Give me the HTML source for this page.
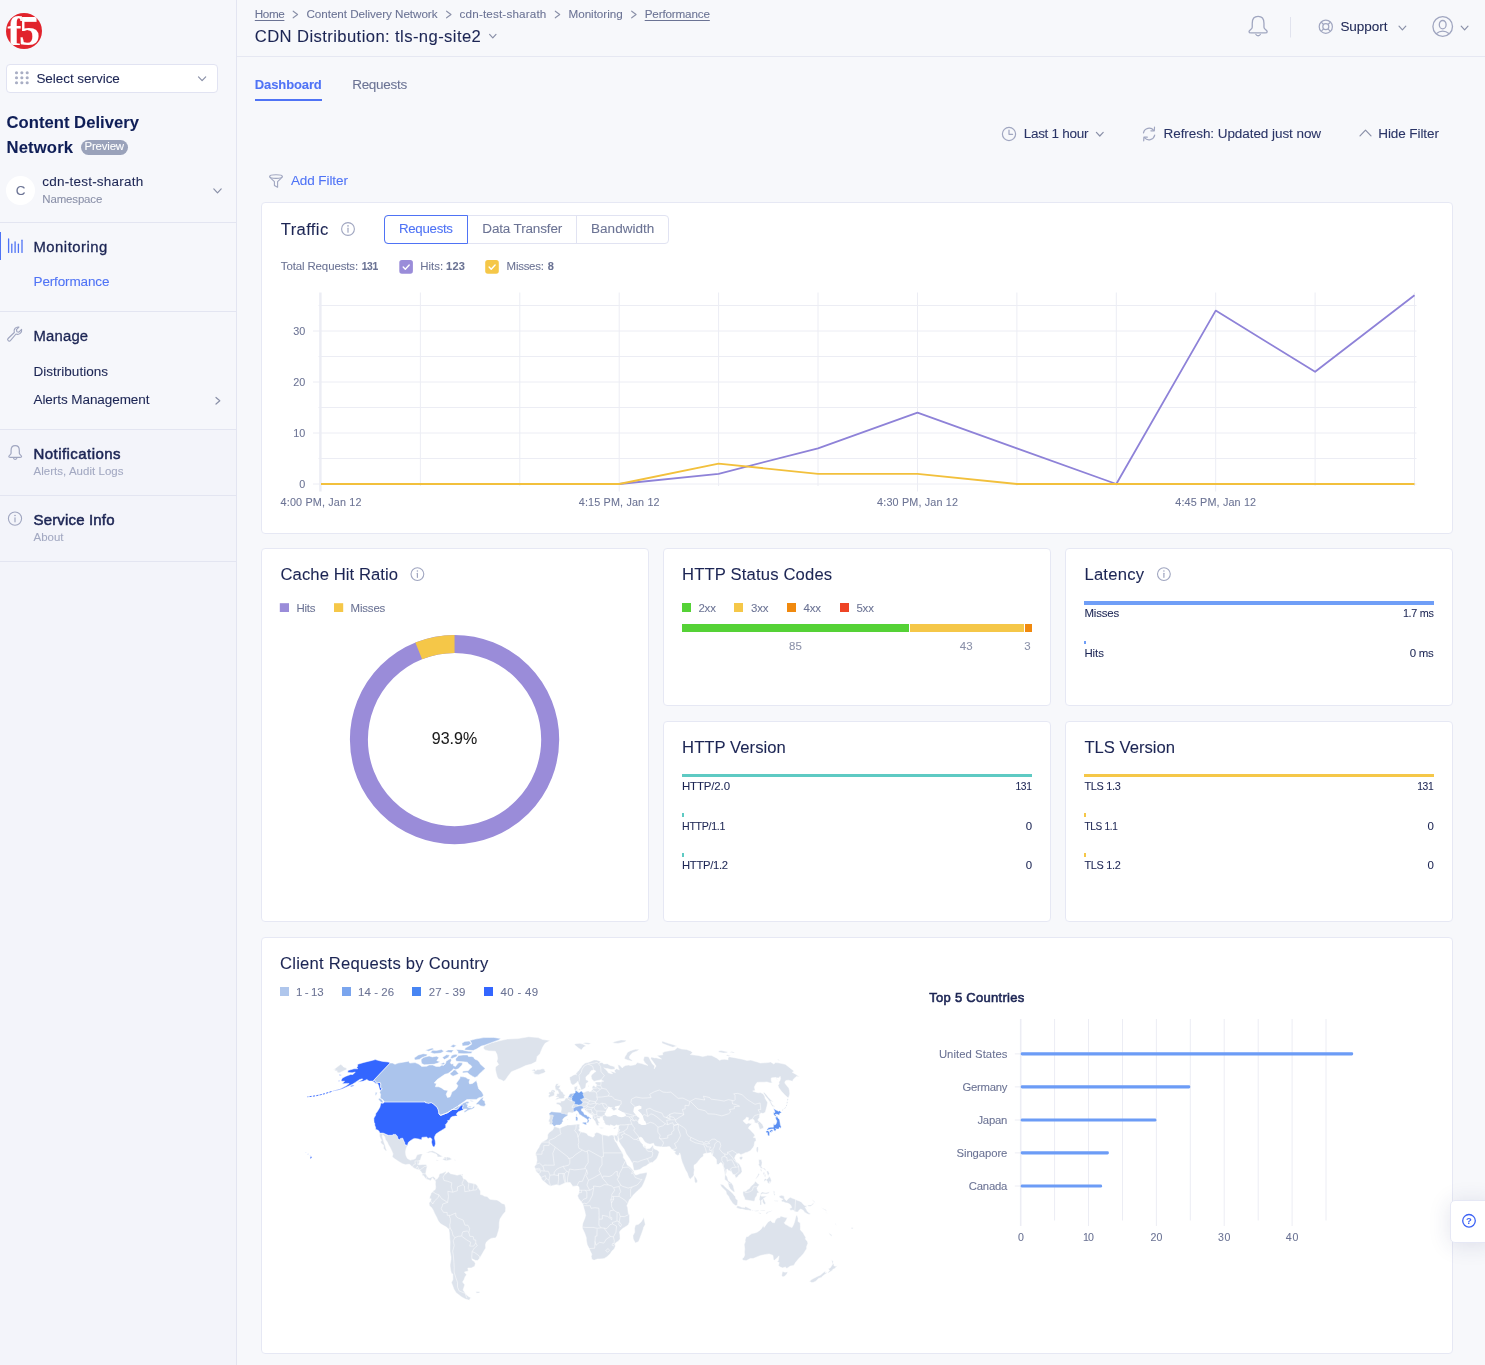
<!DOCTYPE html>
<html lang="en"><head><meta charset="utf-8"><title>CDN Distribution: tls-ng-site2 - Performance</title>
<style>
html,body{margin:0;padding:0}
body{width:1485px;height:1365px;position:relative;overflow:hidden;background:#f7f8fb;font-family:'Liberation Sans', sans-serif;}
#app{position:absolute;left:0;top:0;width:1485px;height:1365px;will-change:transform}
.a{position:absolute;display:block}
svg.a{overflow:visible}
svg text{font-family:'Liberation Sans', sans-serif}
.t{position:absolute;white-space:pre;line-height:1;-webkit-text-stroke:0.08px currentColor;}
</style></head>
<body>
<div id="app">
<aside>
<div class="a" style="left:0px;top:0px;width:236px;height:1365px;background:#f6f7fb;border-right:1px solid #e3e5f1;"></div>
<div class="a" style="left:0px;top:429px;width:236px;height:936px;background:#f3f4fa;"></div>
<div class="a" style="left:0px;top:221.5px;width:236px;height:1px;background:#e3e5f1;"></div>
<div class="a" style="left:0px;top:311px;width:236px;height:1px;background:#e3e5f1;"></div>
<div class="a" style="left:0px;top:429px;width:236px;height:1px;background:#e3e5f1;"></div>
<div class="a" style="left:0px;top:495px;width:236px;height:1px;background:#e3e5f1;"></div>
<div class="a" style="left:0px;top:561px;width:236px;height:1px;background:#e3e5f1;"></div>
<div class="a" style="left:6px;top:13px;width:36px;height:36px;background:#e1232c;border-radius:50%;overflow:hidden"><span class="t" style="left:1.5px;top:-3.5px;font-family:'Liberation Serif',serif;font-weight:700;font-size:42px;letter-spacing:-2.5px;color:#fff;line-height:1">f5</span></div>
<div class="a" style="left:6px;top:64px;width:212px;height:29px;background:#fff;border:1px solid #e1e3f2;border-radius:4px;box-sizing:border-box;"></div>
<svg class="a" style="left:10px;top:66px" width="200" height="26" viewBox="10 66 200 26" ><circle cx="16.5" cy="72.7" r="1.55" fill="#a9aec4"/><circle cx="16.5" cy="77.75" r="1.55" fill="#a9aec4"/><circle cx="16.5" cy="82.8" r="1.55" fill="#a9aec4"/><circle cx="21.85" cy="72.7" r="1.55" fill="#a9aec4"/><circle cx="21.85" cy="77.75" r="1.55" fill="#a9aec4"/><circle cx="21.85" cy="82.8" r="1.55" fill="#a9aec4"/><circle cx="27.2" cy="72.7" r="1.55" fill="#a9aec4"/><circle cx="27.2" cy="77.75" r="1.55" fill="#a9aec4"/><circle cx="27.2" cy="82.8" r="1.55" fill="#a9aec4"/><polyline points="198.5,76.9 202.1,80.6 205.7,76.9" fill="none" stroke="#8a90a8" stroke-width="1.2" stroke-linecap="round" stroke-linejoin="round"/></svg>
<div class="a" style="left:80.8px;top:139.8px;width:47.2px;height:15px;background:#9aa2ba;border-radius:7.5px;"></div>
<div class="a" style="left:6px;top:176px;width:29px;height:29px;background:#fff;border-radius:50%;"></div>
<div class="a" style="left:0px;top:232px;width:1px;height:28px;background:#4f73f5;"></div>
<svg class="a" style="left:0px;top:180px" width="236" height="360" viewBox="0 180 236 360" ><polyline points="213.8,188.9 217.5,192.8 221.2,188.9" fill="none" stroke="#8a90a8" stroke-width="1.2" stroke-linecap="round" stroke-linejoin="round"/><line x1="8.6" y1="239" x2="8.6" y2="252.4" stroke="#4f73f5" stroke-width="1.3" stroke-linecap="round"/><line x1="11.8" y1="244.2" x2="11.8" y2="252.4" stroke="#4f73f5" stroke-width="1.3" stroke-linecap="round"/><line x1="15.1" y1="241.8" x2="15.1" y2="252.4" stroke="#4f73f5" stroke-width="1.3" stroke-linecap="round"/><line x1="18.4" y1="244.2" x2="18.4" y2="252.4" stroke="#4f73f5" stroke-width="1.3" stroke-linecap="round"/><line x1="22.0" y1="240.2" x2="22.0" y2="252.4" stroke="#4f73f5" stroke-width="1.3" stroke-linecap="round"/><path d="M21.6 329.4 a4.1 4.1 0 0 1 -5.6 4.6 l-5.6 6.6 a1.55 1.55 0 0 1 -2.3 -2.1 l6.2 -6 a4.1 4.1 0 0 1 4.6 -5.4 l-2.5 2.6 0.5 2 2 0.5 z" fill="none" stroke="#a0a6c0" stroke-width="1.15" stroke-linejoin="round"/><polyline points="216,397.5 219.8,400.75 216,404" fill="none" stroke="#8a90a8" stroke-width="1.2" stroke-linecap="round" stroke-linejoin="round"/><path d="M15.20,445.71 C12.36,445.71 11.08,447.99 11.08,450.47 L11.08,453.31 C11.08,454.73 8.81,455.44 8.81,456.50 C8.81,457.22 9.52,457.36 10.23,457.36 L20.17,457.36 C20.88,457.36 21.59,457.22 21.59,456.50 C21.59,455.44 19.32,454.73 19.32,453.31 L19.32,450.47 C19.32,447.99 18.04,445.71 15.20,445.71 Z" fill="none" stroke="#a0a6c0" stroke-width="1.2" stroke-linejoin="round"/><path d="M13.64,458.35 C14.13,459.63 16.27,459.63 16.76,458.35" fill="none" stroke="#a0a6c0" stroke-width="1.2" stroke-linecap="round"/><circle cx="15" cy="518.6" r="6.6" fill="none" stroke="#a0a6c0" stroke-width="1.1"/><line x1="15" y1="517.8000000000001" x2="15" y2="521.8000000000001" stroke="#a0a6c0" stroke-width="1.2" stroke-linecap="round"/><circle cx="15" cy="515.5" r="0.8" fill="#a0a6c0"/></svg>
<span class="t" style="left:36.40px;top:72.00px;font-size:13.52px;color:#1c2554;letter-spacing:-0.049px;">Select service</span>
<span class="t" style="left:6.50px;top:115.00px;font-size:16.64px;color:#0f1e57;font-weight:700;letter-spacing:0.026px;">Content Delivery</span>
<span class="t" style="left:6.50px;top:140.00px;font-size:16.64px;color:#0f1e57;font-weight:700;letter-spacing:0.151px;">Network</span>
<span class="t" style="left:84.50px;top:141.00px;font-size:11.44px;color:#ffffff;letter-spacing:-0.181px;">Preview</span>
<span class="t" style="left:15.70px;top:184.00px;font-size:13.52px;color:#6b7394;">C</span>
<span class="t" style="left:42.30px;top:175.00px;font-size:13.52px;color:#1c2554;letter-spacing:0.222px;">cdn-test-sharath</span>
<span class="t" style="left:42.30px;top:194.00px;font-size:11.44px;color:#8a90a8;letter-spacing:-0.129px;">Namespace</span>
<span class="t" style="left:33.50px;top:240.00px;font-size:14.85px;color:#1c2554;letter-spacing:0.488px;-webkit-text-stroke:0.3px #1c2554;">Monitoring</span>
<span class="t" style="left:33.50px;top:275.00px;font-size:13.52px;color:#4f73f5;letter-spacing:-0.138px;">Performance</span>
<span class="t" style="left:33.50px;top:329.00px;font-size:14.85px;color:#1c2554;letter-spacing:0.189px;-webkit-text-stroke:0.3px #1c2554;">Manage</span>
<span class="t" style="left:33.50px;top:365.00px;font-size:13.52px;color:#1c2554;letter-spacing:0.010px;">Distributions</span>
<span class="t" style="left:33.50px;top:393.00px;font-size:13.52px;color:#1c2554;letter-spacing:-0.075px;">Alerts Management</span>
<span class="t" style="left:33.50px;top:446.00px;font-size:15.0px;color:#1c2554;letter-spacing:0.441px;-webkit-text-stroke:0.52px #1c2554;">Notifications</span>
<span class="t" style="left:33.50px;top:466.00px;font-size:11.44px;color:#a3a9c2;letter-spacing:0.058px;">Alerts, Audit Logs</span>
<span class="t" style="left:33.50px;top:512.00px;font-size:15.0px;color:#1c2554;letter-spacing:0.162px;-webkit-text-stroke:0.52px #1c2554;">Service Info</span>
<span class="t" style="left:33.50px;top:532.00px;font-size:11.44px;color:#a3a9c2;letter-spacing:0.027px;">About</span>
</aside>
<header>
<div class="a" style="left:237px;top:56px;width:1248px;height:1px;background:#e6e8f2;"></div>
<svg class="a" style="left:237px;top:0px" width="1248" height="56" viewBox="237 0 1248 56" ><polyline points="293.2,11.2 297.6,14.5 293.2,17.8" fill="none" stroke="#8a90a8" stroke-width="1.1" stroke-linecap="round" stroke-linejoin="round"/><polyline points="446.6,11.2 451,14.5 446.6,17.8" fill="none" stroke="#8a90a8" stroke-width="1.1" stroke-linecap="round" stroke-linejoin="round"/><polyline points="555.3,11.2 559.7,14.5 555.3,17.8" fill="none" stroke="#8a90a8" stroke-width="1.1" stroke-linecap="round" stroke-linejoin="round"/><polyline points="631.7,11.2 636.1,14.5 631.7,17.8" fill="none" stroke="#8a90a8" stroke-width="1.1" stroke-linecap="round" stroke-linejoin="round"/><polyline points="489.6,34.4 492.8,37.8 496,34.4" fill="none" stroke="#8a90a8" stroke-width="1.2" stroke-linecap="round" stroke-linejoin="round"/><path d="M1258.10,16.40 C1254.06,16.40 1252.24,19.63 1252.24,23.17 L1252.24,27.21 C1252.24,29.23 1249.01,30.24 1249.01,31.75 C1249.01,32.77 1250.02,32.97 1251.03,32.97 L1265.17,32.97 C1266.18,32.97 1267.19,32.77 1267.19,31.75 C1267.19,30.24 1263.96,29.23 1263.96,27.21 L1263.96,23.17 C1263.96,19.63 1262.14,16.40 1258.10,16.40 Z" fill="none" stroke="#a0a6c0" stroke-width="1.3" stroke-linejoin="round"/><path d="M1255.88,34.38 C1256.58,36.20 1259.62,36.20 1260.32,34.38" fill="none" stroke="#a0a6c0" stroke-width="1.3" stroke-linecap="round"/><line x1="1290.5" y1="17" x2="1290.5" y2="37.5" stroke="#e1e3ee" stroke-width="1"/><circle cx="1325.8" cy="26.7" r="6.6" fill="none" stroke="#a0a6c0" stroke-width="1.2"/><circle cx="1325.8" cy="26.7" r="3" fill="none" stroke="#a0a6c0" stroke-width="1.2"/><line x1="1328.0" y1="28.9" x2="1330.3999999999999" y2="31.299999999999997" stroke="#a0a6c0" stroke-width="1.2"/><line x1="1328.0" y1="24.5" x2="1330.3999999999999" y2="22.1" stroke="#a0a6c0" stroke-width="1.2"/><line x1="1323.6" y1="28.9" x2="1321.2" y2="31.299999999999997" stroke="#a0a6c0" stroke-width="1.2"/><line x1="1323.6" y1="24.5" x2="1321.2" y2="22.1" stroke="#a0a6c0" stroke-width="1.2"/><polyline points="1399,26.2 1402.4,29.8 1405.8,26.2" fill="none" stroke="#8a90a8" stroke-width="1.2" stroke-linecap="round" stroke-linejoin="round"/><circle cx="1442.7" cy="26.5" r="9.8" fill="none" stroke="#a0a6c0" stroke-width="1.3"/><ellipse cx="1442.7" cy="24.7" rx="3.4" ry="4.2" fill="none" stroke="#a0a6c0" stroke-width="1.3"/><path d="M1436.1000000000001 33.7 Q1442.7 28.7 1449.3 33.7" fill="none" stroke="#a0a6c0" stroke-width="1.3"/><polyline points="1461.2,26.2 1464.6,29.8 1468,26.2" fill="none" stroke="#8a90a8" stroke-width="1.2" stroke-linecap="round" stroke-linejoin="round"/></svg>
<span class="t" style="left:254.80px;top:8.00px;font-size:11.7px;color:#6b7394;letter-spacing:-0.396px;text-decoration:underline;text-underline-offset:1.5px;">Home</span>
<span class="t" style="left:306.50px;top:8.00px;font-size:11.7px;color:#6b7394;letter-spacing:-0.066px;">Content Delivery Network</span>
<span class="t" style="left:459.60px;top:8.00px;font-size:11.7px;color:#6b7394;letter-spacing:0.150px;">cdn-test-sharath</span>
<span class="t" style="left:568.50px;top:8.00px;font-size:11.7px;color:#6b7394;letter-spacing:-0.042px;">Monitoring</span>
<span class="t" style="left:644.70px;top:8.00px;font-size:11.7px;color:#6b7394;letter-spacing:-0.162px;text-decoration:underline;text-underline-offset:1.5px;">Performance</span>
<span class="t" style="left:254.80px;top:29.00px;font-size:16.64px;color:#1c2554;letter-spacing:0.402px;">CDN Distribution: tls-ng-site2</span>
<span class="t" style="left:1340.40px;top:20.00px;font-size:13.52px;color:#1c2554;letter-spacing:-0.057px;">Support</span>
</header>
<main>
<nav>
<div class="a" style="left:255px;top:98.6px;width:67px;height:2px;background:#4f73f5;"></div>
<svg class="a" style="left:255px;top:120px" width="1230" height="72" viewBox="255 120 1230 72" ><circle cx="1009" cy="134" r="6.6" fill="none" stroke="#a0a6c0" stroke-width="1.2"/><polyline points="1009,130 1009,134.3 1012.6,134.3" fill="none" stroke="#a0a6c0" stroke-width="1.2" stroke-linecap="round" stroke-linejoin="round"/><polyline points="1096.4,132.4 1099.8000000000002,136 1103.2,132.4" fill="none" stroke="#8a90a8" stroke-width="1.2" stroke-linecap="round" stroke-linejoin="round"/><path d="M1143.5 132.8 A5.8 5.8 0 0 1 1153.6999999999998 130.4" fill="none" stroke="#a0a6c0" stroke-width="1.2" stroke-linecap="round"/><polyline points="1154.5,127.2 1154.3,130.8 1150.8999999999999,130.8" fill="none" stroke="#a0a6c0" stroke-width="1.2" stroke-linecap="round" stroke-linejoin="round"/><path d="M1154.6999999999998 135.2 A5.8 5.8 0 0 1 1144.5 137.6" fill="none" stroke="#a0a6c0" stroke-width="1.2" stroke-linecap="round"/><polyline points="1143.6999999999998,140.8 1143.8999999999999,137.2 1147.3,137.2" fill="none" stroke="#a0a6c0" stroke-width="1.2" stroke-linecap="round" stroke-linejoin="round"/><polyline points="1360,135.8 1365.5,130.2 1371,135.8" fill="none" stroke="#8a90a8" stroke-width="1.2" stroke-linecap="round" stroke-linejoin="round"/><path d="M269.6 176.6 C269.6 174.2 282.4 174.2 282.4 176.6 C282.4 177.6 280.5 178.6 277.6 181.6 L277.6 187.2 L274.4 185.4 L274.4 181.6 C271.5 178.6 269.6 177.6 269.6 176.6 Z" fill="none" stroke="#a0a6c0" stroke-width="1.1" stroke-linejoin="round"/><path d="M269.6 176.6 C269.6 179 282.4 179 282.4 176.6" fill="none" stroke="#a0a6c0" stroke-width="1.1"/></svg>
<span class="t" style="left:254.80px;top:78.00px;font-size:13.0px;color:#4f73f5;font-weight:700;letter-spacing:-0.113px;">Dashboard</span>
<span class="t" style="left:352.20px;top:78.00px;font-size:13.52px;color:#6b7394;letter-spacing:-0.301px;">Requests</span>
<span class="t" style="left:1023.70px;top:127.00px;font-size:13.52px;color:#2a3466;letter-spacing:-0.292px;">Last 1 hour</span>
<span class="t" style="left:1163.50px;top:127.00px;font-size:13.52px;color:#2a3466;letter-spacing:-0.070px;">Refresh: Updated just now</span>
<span class="t" style="left:1378.30px;top:127.00px;font-size:13.52px;color:#2a3466;letter-spacing:-0.099px;">Hide Filter</span>
<span class="t" style="left:290.90px;top:174.00px;font-size:13.52px;color:#4f73f5;letter-spacing:-0.094px;">Add Filter</span>
</nav>
<section>
<div class="a" style="left:261px;top:202px;width:1192px;height:332px;background:#fff;border:1px solid #e6e8f4;border-radius:4px;box-sizing:border-box;"></div>
<div class="a" style="left:384px;top:215px;width:285px;height:29px;border:1px solid #e1e3f2;border-radius:4px;box-sizing:border-box;background:#fff;"></div>
<div class="a" style="left:576px;top:215px;width:1px;height:29px;background:#e1e3f2;"></div>
<div class="a" style="left:384px;top:215px;width:84px;height:29px;border:1px solid #4f73f5;border-radius:4px 0 0 4px;box-sizing:border-box;"></div>
<svg class="a" style="left:262px;top:203px" width="1190" height="330" viewBox="262 203 1190 330" ><circle cx="348" cy="229" r="6.4" fill="none" stroke="#a0a6c0" stroke-width="1.1"/><line x1="348" y1="228.2" x2="348" y2="232.2" stroke="#a0a6c0" stroke-width="1.2" stroke-linecap="round"/><circle cx="348" cy="225.9" r="0.8" fill="#a0a6c0"/><rect x="399.3" y="260.1" width="13.6" height="13.6" rx="2.6" fill="#9a8cd9"/><polyline points="403.2,267.1 405.3,269.20000000000005 409.2,265.1" fill="none" stroke="#fff" stroke-width="1.4" stroke-linecap="round" stroke-linejoin="round"/><rect x="485.2" y="260.1" width="13.6" height="13.6" rx="2.6" fill="#f5c748"/><polyline points="489.09999999999997,267.1 491.2,269.20000000000005 495.09999999999997,265.1" fill="none" stroke="#fff" stroke-width="1.4" stroke-linecap="round" stroke-linejoin="round"/><line x1="313" y1="484.0" x2="1416.5" y2="484.0" stroke="#ecedf4" stroke-width="1"/><line x1="318.5" y1="458.5" x2="1416.5" y2="458.5" stroke="#ecedf4" stroke-width="1"/><line x1="313" y1="433.0" x2="1416.5" y2="433.0" stroke="#ecedf4" stroke-width="1"/><line x1="318.5" y1="407.5" x2="1416.5" y2="407.5" stroke="#ecedf4" stroke-width="1"/><line x1="313" y1="382.0" x2="1416.5" y2="382.0" stroke="#ecedf4" stroke-width="1"/><line x1="318.5" y1="356.5" x2="1416.5" y2="356.5" stroke="#ecedf4" stroke-width="1"/><line x1="313" y1="331.0" x2="1416.5" y2="331.0" stroke="#ecedf4" stroke-width="1"/><line x1="318.5" y1="305.5" x2="1416.5" y2="305.5" stroke="#ecedf4" stroke-width="1"/><line x1="320.4" y1="292.5" x2="320.4" y2="491.5" stroke="#ecedf4" stroke-width="2.4"/><line x1="420.4" y1="292.5" x2="420.4" y2="486" stroke="#ecedf4" stroke-width="1"/><line x1="519.8" y1="292.5" x2="519.8" y2="486" stroke="#ecedf4" stroke-width="1"/><line x1="619.2" y1="292.5" x2="619.2" y2="491.5" stroke="#ecedf4" stroke-width="1"/><line x1="718.6" y1="292.5" x2="718.6" y2="486" stroke="#ecedf4" stroke-width="1"/><line x1="818.0" y1="292.5" x2="818.0" y2="486" stroke="#ecedf4" stroke-width="1"/><line x1="917.5" y1="292.5" x2="917.5" y2="491.5" stroke="#ecedf4" stroke-width="1"/><line x1="1016.9" y1="292.5" x2="1016.9" y2="486" stroke="#ecedf4" stroke-width="1"/><line x1="1116.3" y1="292.5" x2="1116.3" y2="486" stroke="#ecedf4" stroke-width="1"/><line x1="1215.7" y1="292.5" x2="1215.7" y2="491.5" stroke="#ecedf4" stroke-width="1"/><line x1="1315.1" y1="292.5" x2="1315.1" y2="486" stroke="#ecedf4" stroke-width="1"/><line x1="1414.5" y1="292.5" x2="1414.5" y2="486" stroke="#ecedf4" stroke-width="1"/><polyline points="321.0,484.0 420.4,484.0 519.8,484.0 619.2,484.0 718.6,473.8 818.0,448.3 917.5,412.6 1016.9,448.3 1116.3,484.0 1215.7,310.6 1315.1,371.8 1414.5,295.3" fill="none" stroke="#8e82d8" stroke-width="1.8" stroke-linejoin="round"/><polyline points="321.0,484.0 420.4,484.0 519.8,484.0 619.2,484.0 718.6,463.6 818.0,473.8 917.5,473.8 1016.9,484.0 1116.3,484.0 1215.7,484.0 1315.1,484.0 1414.5,484.0" fill="none" stroke="#f2c03c" stroke-width="1.8" stroke-linejoin="round"/><text x="305.3" y="487.6" text-anchor="end" style="font-size:10.8px;fill:#6b7394;stroke:#6b7394;stroke-width:0.08px">0</text><text x="305.3" y="436.6" text-anchor="end" style="font-size:10.8px;fill:#6b7394;stroke:#6b7394;stroke-width:0.08px">10</text><text x="305.3" y="385.6" text-anchor="end" style="font-size:10.8px;fill:#6b7394;stroke:#6b7394;stroke-width:0.08px">20</text><text x="305.3" y="334.6" text-anchor="end" style="font-size:10.8px;fill:#6b7394;stroke:#6b7394;stroke-width:0.08px">30</text><text x="280.6" y="505.9" textLength="80.8" lengthAdjust="spacing" style="font-size:10.8px;fill:#6b7394;stroke:#6b7394;stroke-width:0.08px">4:00 PM, Jan 12</text><text x="578.8" y="505.9" textLength="80.8" lengthAdjust="spacing" style="font-size:10.8px;fill:#6b7394;stroke:#6b7394;stroke-width:0.08px">4:15 PM, Jan 12</text><text x="877.1" y="505.9" textLength="80.8" lengthAdjust="spacing" style="font-size:10.8px;fill:#6b7394;stroke:#6b7394;stroke-width:0.08px">4:30 PM, Jan 12</text><text x="1175.3" y="505.9" textLength="80.8" lengthAdjust="spacing" style="font-size:10.8px;fill:#6b7394;stroke:#6b7394;stroke-width:0.08px">4:45 PM, Jan 12</text></svg>
<span class="t" style="left:280.80px;top:222.00px;font-size:16.64px;color:#1c2554;letter-spacing:0.356px;">Traffic</span>
<span class="t" style="left:399.00px;top:222.00px;font-size:13.28px;color:#4f73f5;letter-spacing:-0.292px;">Requests</span>
<span class="t" style="left:482.30px;top:222.00px;font-size:13.52px;color:#6b7394;letter-spacing:-0.158px;">Data Transfer</span>
<span class="t" style="left:591.00px;top:222.00px;font-size:13.52px;color:#6b7394;letter-spacing:0.034px;">Bandwidth</span>
<span class="t" style="left:280.80px;top:261.00px;font-size:11.44px;color:#6b7394;letter-spacing:-0.110px;">Total Requests:</span>
<span class="t" style="left:361.70px;top:262.00px;font-size:10.31px;color:#6b7394;font-weight:700;letter-spacing:-0.294px;">131</span>
<span class="t" style="left:420.30px;top:261.00px;font-size:11.44px;color:#6b7394;letter-spacing:-0.019px;">Hits:</span>
<span class="t" style="left:446.10px;top:261.00px;font-size:11.0px;color:#6b7394;font-weight:700;letter-spacing:0.170px;">123</span>
<span class="t" style="left:506.60px;top:261.00px;font-size:11.44px;color:#6b7394;letter-spacing:-0.244px;">Misses:</span>
<span class="t" style="left:547.70px;top:261.00px;font-size:11.0px;color:#6b7394;font-weight:700;">8</span>
</section>
<section>
<div class="a" style="left:261px;top:548px;width:388px;height:374px;background:#fff;border:1px solid #e6e8f4;border-radius:4px;box-sizing:border-box;"></div>
<svg class="a" style="left:262px;top:549px" width="386" height="372" viewBox="262 549 386 372" ><circle cx="417.4" cy="574.1" r="6.4" fill="none" stroke="#a0a6c0" stroke-width="1.1"/><line x1="417.4" y1="573.3000000000001" x2="417.4" y2="577.3000000000001" stroke="#a0a6c0" stroke-width="1.2" stroke-linecap="round"/><circle cx="417.4" cy="571.0" r="0.8" fill="#a0a6c0"/><rect x="279.8" y="603.2" width="9.2" height="8.8" fill="#9a8cd9"/><rect x="334" y="603.2" width="9.2" height="8.8" fill="#f5c748"/><circle cx="454.55" cy="739.55" r="95.65" fill="none" stroke="#9a8cd9" stroke-width="18"/><path d="M454.55 643.9 A95.65 95.65 0 0 0 418.74 650.86" fill="none" stroke="#f5c748" stroke-width="18"/></svg>
<span class="t" style="left:280.50px;top:567.00px;font-size:16.64px;color:#1c2554;letter-spacing:0.083px;">Cache Hit Ratio</span>
<span class="t" style="left:296.40px;top:603.00px;font-size:11.44px;color:#6b7394;letter-spacing:-0.168px;">Hits</span>
<span class="t" style="left:350.60px;top:603.00px;font-size:11.44px;color:#6b7394;letter-spacing:-0.179px;">Misses</span>
<span class="t" style="left:431.81px;top:731.00px;font-size:16.0px;color:#1a1a1a;">93.9%</span>
</section>
<section>
<div class="a" style="left:663px;top:548px;width:388px;height:158px;background:#fff;border:1px solid #e6e8f4;border-radius:4px;box-sizing:border-box;"></div>
<div class="a" style="left:682.1px;top:603.3px;width:9px;height:8.8px;background:#55d236;"></div>
<div class="a" style="left:734.1px;top:603.3px;width:9px;height:8.8px;background:#f5c748;"></div>
<div class="a" style="left:787px;top:603.3px;width:9px;height:8.8px;background:#f0890e;"></div>
<div class="a" style="left:840.1px;top:603.3px;width:9px;height:8.8px;background:#ee4425;"></div>
<div class="a" style="left:682.1px;top:624px;width:226.6px;height:7.8px;background:#55d236;"></div>
<div class="a" style="left:910px;top:624px;width:113.8px;height:7.8px;background:#f5c748;"></div>
<div class="a" style="left:1025.1px;top:624px;width:6.9px;height:7.8px;background:#f0890e;"></div>
<span class="t" style="left:682.10px;top:567.00px;font-size:16.64px;color:#1c2554;letter-spacing:0.154px;">HTTP Status Codes</span>
<span class="t" style="left:698.40px;top:603.00px;font-size:11.44px;color:#6b7394;letter-spacing:-0.156px;">2xx</span>
<span class="t" style="left:751.00px;top:603.00px;font-size:11.44px;color:#6b7394;letter-spacing:-0.156px;">3xx</span>
<span class="t" style="left:803.50px;top:603.00px;font-size:11.44px;color:#6b7394;letter-spacing:-0.156px;">4xx</span>
<span class="t" style="left:856.40px;top:603.00px;font-size:11.44px;color:#6b7394;letter-spacing:-0.156px;">5xx</span>
<span class="t" style="left:789.00px;top:641.00px;font-size:11.44px;color:#8a90a8;letter-spacing:0.066px;">85</span>
<span class="t" style="left:959.75px;top:641.00px;font-size:11.44px;color:#8a90a8;letter-spacing:0.166px;">43</span>
<span class="t" style="left:1024.35px;top:641.00px;font-size:11.44px;color:#8a90a8;">3</span>
</section>
<section>
<div class="a" style="left:1065px;top:548px;width:388px;height:158px;background:#fff;border:1px solid #e6e8f4;border-radius:4px;box-sizing:border-box;"></div>
<svg class="a" style="left:1150px;top:560px" width="30" height="30" viewBox="1150 560 30 30" ><circle cx="1163.9" cy="574.1" r="6.4" fill="none" stroke="#a0a6c0" stroke-width="1.1"/><line x1="1163.9" y1="573.3000000000001" x2="1163.9" y2="577.3000000000001" stroke="#a0a6c0" stroke-width="1.2" stroke-linecap="round"/><circle cx="1163.9" cy="571.0" r="0.8" fill="#a0a6c0"/></svg>
<div class="a" style="left:1084.4px;top:600.9px;width:349.6px;height:4px;background:#6f9ef7;"></div>
<div class="a" style="left:1084.4px;top:640.8px;width:1.8px;height:3px;background:#6f9ef7;"></div>
<span class="t" style="left:1084.40px;top:567.00px;font-size:16.64px;color:#1c2554;letter-spacing:0.244px;">Latency</span>
<span class="t" style="left:1084.40px;top:608.00px;font-size:11.44px;color:#1c2554;letter-spacing:-0.139px;">Misses</span>
<span class="t" style="left:1402.90px;top:608.00px;font-size:10.8px;color:#1c2554;letter-spacing:-0.301px;">1.7 ms</span>
<span class="t" style="left:1084.40px;top:648.00px;font-size:11.44px;color:#1c2554;letter-spacing:-0.034px;">Hits</span>
<span class="t" style="left:1409.80px;top:648.00px;font-size:11.44px;color:#1c2554;letter-spacing:-0.266px;">0 ms</span>
</section>
<section>
<div class="a" style="left:663px;top:721px;width:388px;height:201px;background:#fff;border:1px solid #e6e8f4;border-radius:4px;box-sizing:border-box;"></div>
<div class="a" style="left:682px;top:773.5px;width:350px;height:3.6px;background:#5ecac3;"></div>
<div class="a" style="left:682px;top:813.1px;width:1.8px;height:3.5px;background:#5ecac3;"></div>
<div class="a" style="left:682px;top:853px;width:1.8px;height:3.5px;background:#5ecac3;"></div>
<span class="t" style="left:682.10px;top:740.00px;font-size:16.64px;color:#1c2554;letter-spacing:0.047px;">HTTP Version</span>
<span class="t" style="left:682.00px;top:781.00px;font-size:11.44px;color:#1c2554;letter-spacing:-0.136px;">HTTP/2.0</span>
<span class="t" style="left:1015.40px;top:782.00px;font-size:10.31px;color:#1c2554;letter-spacing:-0.294px;">131</span>
<span class="t" style="left:682.00px;top:821.00px;font-size:10.63px;color:#1c2554;letter-spacing:-0.296px;">HTTP/1.1</span>
<span class="t" style="left:1025.70px;top:821.00px;font-size:11.44px;color:#1c2554;">0</span>
<span class="t" style="left:682.00px;top:860.00px;font-size:11.24px;color:#1c2554;letter-spacing:-0.297px;">HTTP/1.2</span>
<span class="t" style="left:1025.70px;top:860.00px;font-size:11.44px;color:#1c2554;">0</span>
</section>
<section>
<div class="a" style="left:1065px;top:721px;width:388px;height:201px;background:#fff;border:1px solid #e6e8f4;border-radius:4px;box-sizing:border-box;"></div>
<div class="a" style="left:1084.4px;top:773.5px;width:350px;height:3.6px;background:#f5c748;"></div>
<div class="a" style="left:1084.4px;top:813.1px;width:1.8px;height:3.5px;background:#f5c748;"></div>
<div class="a" style="left:1084.4px;top:853px;width:1.8px;height:3.5px;background:#f5c748;"></div>
<span class="t" style="left:1084.40px;top:740.00px;font-size:16.64px;color:#1c2554;">TLS Version</span>
<span class="t" style="left:1084.40px;top:781.00px;font-size:10.88px;color:#1c2554;letter-spacing:-0.299px;">TLS 1.3</span>
<span class="t" style="left:1417.20px;top:782.00px;font-size:10.31px;color:#1c2554;letter-spacing:-0.294px;">131</span>
<span class="t" style="left:1084.40px;top:822.00px;font-size:10.07px;color:#1c2554;letter-spacing:-0.308px;">TLS 1.1</span>
<span class="t" style="left:1427.50px;top:821.00px;font-size:11.44px;color:#1c2554;">0</span>
<span class="t" style="left:1084.40px;top:860.00px;font-size:10.88px;color:#1c2554;letter-spacing:-0.299px;">TLS 1.2</span>
<span class="t" style="left:1427.50px;top:860.00px;font-size:11.44px;color:#1c2554;">0</span>
</section>
<section>
<div class="a" style="left:261px;top:937px;width:1192px;height:417px;background:#fff;border:1px solid #e6e8f4;border-radius:4px;box-sizing:border-box;"></div>
<div class="a" style="left:280px;top:987.4px;width:9px;height:8.8px;background:#afc6ec;"></div>
<div class="a" style="left:341.8px;top:987.4px;width:9px;height:8.8px;background:#7aa5ee;"></div>
<div class="a" style="left:412px;top:987.4px;width:9px;height:8.8px;background:#4785f3;"></div>
<div class="a" style="left:484.2px;top:987.4px;width:9px;height:8.8px;background:#3366ff;"></div>
<svg class="a" style="left:270px;top:1010px" width="620" height="330" viewBox="270 1010 620 330" ><path d="M484.1 1046.1L491.1 1042.9L499.3 1040.8L507.6 1039.0L517.8 1038.6L528.6 1036.7L538.2 1037.6L542.7 1039.5L550.2 1040.5L545.1 1043.3L542.8 1047.1L541.1 1050.9L540.0 1053.7L537.2 1056.5L536.7 1059.4L536.3 1061.6L531.5 1064.1L525.7 1065.6L520.7 1067.9L515.7 1070.1L511.5 1071.7L508.5 1075.4L505.3 1080.2L503.7 1081.3L501.3 1080.0L498.3 1078.8L497.1 1076.4L496.2 1073.2L495.4 1069.8L495.5 1066.9L498.7 1064.5L496.8 1061.6L497.6 1058.4L497.0 1054.6L495.3 1051.2L488.7 1050.9L484.8 1049.9L483.3 1048.0ZM379.5 1133.1L383.1 1133.1L388.2 1135.3L392.8 1135.3L393.0 1134.4L395.7 1134.4L397.6 1136.7L397.7 1138.6L399.5 1139.7L400.6 1138.4L402.7 1138.2L403.8 1141.0L404.7 1142.5L404.8 1144.6L407.4 1145.4L406.0 1149.1L405.5 1152.0L405.9 1155.2L407.2 1158.2L408.8 1159.3L410.3 1160.1L413.7 1159.3L415.4 1158.6L416.6 1155.8L417.1 1154.8L420.1 1153.9L422.6 1153.9L421.3 1156.7L420.4 1159.9L419.5 1160.5L419.4 1162.4L418.2 1164.4L419.5 1164.8L422.8 1164.4L426.0 1164.6L427.2 1166.2L426.3 1169.9L425.7 1173.7L426.7 1175.6L428.2 1177.5L429.8 1177.9L431.7 1176.9L433.2 1176.5L435.1 1177.9L435.7 1178.1L434.8 1180.9L433.9 1179.4L432.3 1177.7L430.8 1180.7L428.9 1179.9L426.6 1179.2L425.4 1178.2L423.4 1175.6L422.1 1175.6L422.4 1173.7L420.5 1170.9L419.4 1169.9L416.6 1169.2L414.2 1168.2L412.4 1167.1L409.7 1164.3L408.1 1164.3L405.6 1164.8L402.5 1163.7L400.2 1162.4L397.2 1160.5L394.3 1158.6L392.2 1156.7L393.0 1153.9L391.7 1150.7L390.0 1147.2L388.3 1144.4L387.3 1142.0L385.5 1139.7L384.8 1136.9L382.8 1134.6L382.2 1136.3L383.2 1139.7L384.0 1142.5L385.2 1145.4L385.8 1148.2L386.9 1150.7L385.7 1151.0L383.4 1148.2L383.8 1145.4L381.4 1143.5L380.5 1142.0L381.7 1140.3L380.4 1138.2L379.5 1135.9ZM426.1 1153.1L429.4 1151.2L432.7 1150.8L435.7 1152.2L438.7 1153.9L440.9 1155.4L442.9 1156.3L440.7 1156.9L437.5 1156.9L437.2 1155.6L436.3 1154.1L433.2 1152.9L430.9 1152.2L428.3 1152.9ZM442.2 1159.7L444.8 1156.9L447.2 1156.9L449.7 1157.5L452.0 1159.3L450.1 1159.9L447.6 1160.5L446.4 1161.0L443.6 1160.1ZM435.8 1159.7L439.0 1160.3L437.0 1160.9ZM453.9 1159.7L456.3 1159.9L454.9 1160.6ZM435.7 1178.1L436.7 1179.4L438.8 1176.5L439.1 1174.5L440.3 1173.5L442.4 1173.1L445.0 1171.8L445.9 1171.1L446.1 1172.8L445.2 1174.1L448.3 1171.8L450.6 1173.7L454.7 1174.5L457.1 1175.2L460.4 1174.3L462.8 1176.5L463.0 1178.2L465.9 1179.4L468.3 1182.6L472.4 1183.3L475.7 1184.1L477.6 1186.0L478.9 1188.8L480.5 1191.1L480.5 1194.5L483.0 1195.1L483.8 1196.0L487.1 1196.6L489.9 1199.2L493.7 1199.8L497.0 1200.0L499.5 1201.5L502.0 1203.4L504.8 1204.3L505.7 1207.9L505.5 1211.5L503.1 1214.3L501.8 1216.2L500.0 1219.1L499.3 1222.8L499.2 1227.6L498.6 1230.4L497.8 1232.9L496.9 1236.1L495.4 1238.0L493.5 1238.0L491.1 1238.5L488.7 1239.9L486.2 1242.3L485.5 1244.6L485.7 1248.0L484.0 1250.8L482.7 1253.1L481.3 1255.4L479.7 1258.2L477.7 1260.5L475.7 1260.5L471.9 1258.8L472.1 1259.9L474.3 1261.6L475.4 1263.5L474.7 1266.3L471.2 1268.0L467.8 1268.0L468.3 1271.0L464.4 1272.0L466.6 1274.8L465.1 1276.7L464.1 1279.5L462.6 1282.0L464.8 1284.8L463.8 1287.7L463.1 1289.9L465.3 1293.3L465.9 1294.3L468.5 1296.6L471.5 1297.9L470.0 1298.6L469.4 1300.3L465.2 1299.0L461.6 1296.9L458.7 1294.7L456.1 1292.8L453.8 1289.0L452.5 1285.2L451.4 1282.6L452.9 1279.5L452.8 1273.9L451.5 1273.5L450.6 1270.1L450.1 1266.3L450.1 1264.4L450.9 1259.7L451.0 1256.9L450.0 1251.2L450.0 1246.5L450.1 1241.8L449.8 1238.9L449.4 1233.2L448.8 1229.3L446.7 1227.2L443.2 1225.3L440.3 1223.6L438.2 1220.8L436.6 1217.2L434.6 1213.4L433.1 1210.0L431.5 1207.5L429.4 1205.7L429.0 1203.0L430.6 1200.9L431.2 1198.8L429.4 1198.7L429.9 1196.4L430.8 1194.5L431.0 1193.0L432.8 1191.9L433.0 1191.1L435.2 1189.6L435.7 1187.1L435.3 1184.1L435.6 1181.6L434.8 1180.9ZM475.6 1291.8L479.1 1291.5L480.1 1292.8L476.7 1293.3ZM461.4 1174.3L463.1 1174.1L462.8 1175.4L461.3 1175.4ZM553.9 1126.8L554.8 1126.6L558.3 1127.8L559.9 1128.2L562.1 1127.0L567.6 1124.9L570.7 1124.9L574.6 1124.6L578.1 1124.0L580.0 1124.6L579.3 1126.5L579.8 1128.3L578.6 1130.2L580.2 1131.6L582.6 1132.3L583.7 1132.3L587.0 1133.5L587.9 1135.3L590.6 1136.3L593.0 1137.2L594.5 1135.9L594.5 1133.8L596.7 1132.3L599.0 1132.9L602.3 1134.8L606.0 1135.3L608.7 1136.1L610.2 1135.3L611.7 1135.0L613.8 1135.3L614.5 1137.8L614.2 1138.6L615.4 1141.6L616.8 1143.1L618.1 1145.7L620.0 1149.1L622.5 1152.9L623.3 1155.2L623.3 1157.5L625.6 1160.5L627.3 1165.0L630.3 1167.1L632.9 1169.9L633.9 1170.9L633.8 1172.6L635.2 1174.7L636.9 1174.8L640.1 1173.5L643.4 1173.1L647.1 1172.2L646.9 1174.8L645.3 1179.4L643.7 1183.2L642.1 1186.4L638.9 1189.8L637.7 1190.7L634.8 1193.6L633.1 1195.3L631.5 1197.7L629.3 1199.8L628.5 1202.1L626.9 1205.8L627.7 1207.4L628.0 1210.6L628.4 1213.4L629.6 1214.7L629.5 1218.1L629.5 1221.9L628.2 1225.1L624.8 1227.2L623.0 1228.3L620.6 1230.4L619.5 1231.9L620.0 1235.1L620.1 1238.9L618.3 1241.2L615.8 1242.7L615.1 1243.6L615.3 1246.5L614.2 1248.9L612.0 1251.0L610.2 1253.7L607.6 1256.3L606.7 1256.9L604.3 1258.4L602.9 1258.8L599.6 1258.9L597.3 1259.1L594.1 1260.3L591.8 1259.3L591.7 1258.6L591.2 1256.5L591.8 1254.2L590.3 1251.2L589.2 1248.6L587.2 1244.8L586.3 1239.9L586.3 1237.8L584.7 1233.2L582.5 1228.5L582.2 1227.0L582.8 1223.2L584.9 1218.1L585.6 1215.3L584.7 1211.1L583.3 1206.0L582.8 1204.0L581.3 1201.9L578.7 1198.7L577.5 1195.8L578.7 1193.7L579.2 1190.2L579.0 1187.1L577.7 1186.0L576.7 1186.0L574.5 1186.2L572.9 1186.4L571.2 1184.1L570.2 1182.6L568.6 1182.4L567.0 1182.6L565.0 1183.0L562.7 1184.1L559.7 1185.4L557.2 1184.9L556.4 1184.7L553.1 1185.4L550.6 1186.2L548.2 1185.0L545.2 1182.6L544.1 1181.5L542.4 1180.3L541.3 1178.4L540.5 1176.5L538.7 1174.1L538.1 1173.3L536.8 1172.2L535.6 1171.1L535.5 1169.2L534.4 1166.7L536.1 1164.3L537.0 1160.5L536.6 1157.6L536.3 1155.6L535.5 1155.2L535.7 1152.9L537.3 1149.7L539.0 1147.2L539.8 1145.0L542.0 1142.1L544.8 1140.6L547.2 1138.9L547.7 1136.9L547.6 1135.0L548.6 1133.1L551.1 1131.0L552.4 1130.2L553.7 1128.0ZM643.8 1217.2L645.1 1223.4L645.3 1224.6L643.5 1227.6L643.3 1228.9L641.4 1234.2L639.3 1239.9L638.4 1241.8L635.3 1242.9L633.2 1238.9L632.9 1235.7L634.7 1232.3L634.5 1228.5L635.4 1225.1L638.5 1224.2L641.1 1221.9L642.9 1219.1ZM613.8 1135.3L616.8 1135.3L617.6 1133.8L617.8 1132.1L618.4 1130.4L618.6 1128.3L618.6 1126.5L618.9 1125.3L617.5 1125.3L616.4 1124.9L614.1 1126.3L612.4 1125.5L610.4 1124.8L610.2 1125.9L607.9 1125.3L606.5 1125.1L605.2 1124.6L604.8 1122.9L603.3 1122.1L604.2 1121.9L604.0 1120.8L602.8 1119.8L602.9 1118.9L602.5 1117.8L602.4 1117.2L600.0 1117.2L599.8 1118.5L598.5 1118.5L597.8 1117.8L597.4 1118.9L598.0 1120.0L598.5 1121.4L599.9 1122.7L599.9 1123.3L598.3 1122.9L598.7 1123.8L598.8 1125.5L597.8 1125.7L596.5 1124.9L595.8 1123.2L595.4 1122.3L595.2 1121.5L594.7 1120.8L593.5 1119.5L592.5 1118.3L592.5 1116.4L592.3 1115.3L590.9 1114.4L588.5 1113.2L587.6 1112.3L585.7 1111.0L584.5 1109.1L583.7 1109.8L583.2 1108.5L581.3 1108.9L581.5 1111.0L583.2 1112.1L584.4 1114.4L587.0 1115.3L587.2 1116.3L588.8 1116.8L591.2 1118.7L590.9 1119.3L589.1 1118.1L588.3 1119.5L589.2 1120.8L588.5 1121.9L587.7 1122.9L587.0 1122.5L587.3 1121.4L587.6 1120.2L586.8 1118.9L585.7 1118.3L584.5 1117.4L582.7 1116.4L581.4 1115.5L579.7 1114.4L578.8 1113.2L578.4 1112.3L577.6 1111.2L576.3 1110.6L575.0 1111.5L574.1 1111.7L573.5 1112.3L572.3 1113.0L570.9 1112.7L569.7 1112.5L568.2 1112.7L567.7 1114.2L567.8 1115.3L566.3 1116.3L564.2 1117.6L563.0 1119.1L562.5 1120.0L563.3 1121.2L562.2 1122.1L561.9 1123.4L560.1 1124.8L559.6 1125.1L556.2 1125.1L554.8 1126.1L554.3 1126.5L553.3 1125.5L552.4 1124.2L551.6 1124.2L550.7 1124.6L549.3 1124.6L549.5 1121.9L548.5 1121.2L548.8 1120.0L549.5 1118.5L549.8 1116.6L549.6 1115.3L549.6 1114.9L549.0 1113.4L550.4 1112.5L551.5 1111.7L554.3 1112.1L557.3 1112.3L560.3 1112.5L560.8 1112.3L561.2 1110.2L561.4 1108.3L561.2 1107.2L559.8 1105.3L558.9 1104.7L556.7 1104.2L556.0 1103.0L557.9 1102.3L560.1 1102.6L560.7 1102.6L560.7 1100.6L561.4 1101.1L563.1 1100.9L564.6 1100.2L565.3 1098.7L565.6 1098.2L566.6 1097.9L567.9 1097.4L568.7 1096.2L569.7 1094.5L570.6 1093.8L572.9 1093.6L574.6 1093.2L575.3 1092.6L575.4 1091.9L575.0 1090.7L574.3 1089.6L574.2 1087.7L574.3 1086.8L576.1 1086.4L577.5 1085.4L577.5 1086.8L577.1 1087.7L578.1 1087.9L577.2 1088.5L576.7 1089.6L576.3 1090.7L577.0 1091.5L578.5 1091.7L578.2 1092.4L579.2 1092.4L580.0 1092.1L580.6 1091.5L581.8 1091.1L582.4 1092.3L583.0 1092.6L585.0 1092.1L586.9 1091.1L588.8 1090.9L589.3 1091.7L590.4 1091.7L591.0 1090.7L592.3 1090.0L592.4 1089.2L592.1 1087.7L592.6 1086.0L594.0 1085.4L595.1 1086.8L596.2 1086.8L596.4 1085.1L596.4 1084.1L595.0 1083.4L594.9 1082.6L596.4 1082.0L598.1 1081.9L600.9 1082.0L602.1 1081.3L603.7 1081.2L602.0 1080.7L601.4 1079.8L599.2 1080.2L596.6 1080.7L594.0 1081.5L592.9 1080.3L591.6 1079.0L591.6 1078.3L591.1 1076.4L591.3 1075.2L592.9 1073.7L594.6 1072.2L595.7 1071.7L595.4 1070.7L593.9 1070.1L591.4 1070.5L590.1 1072.2L589.4 1073.9L587.3 1075.6L586.6 1076.2L585.9 1077.3L586.0 1079.8L587.9 1080.5L588.5 1081.5L587.5 1082.4L586.1 1083.6L585.9 1085.3L585.7 1087.3L584.7 1088.3L582.9 1089.4L581.4 1089.9L580.7 1088.7L579.5 1085.4L578.2 1083.0L577.4 1081.3L577.0 1082.6L575.9 1083.2L573.9 1084.7L572.6 1084.9L570.7 1083.2L570.1 1080.3L569.7 1079.2L569.7 1076.9L571.2 1076.4L573.1 1075.2L575.4 1074.3L576.6 1074.7L575.6 1074.1L577.4 1071.8L578.6 1070.7L579.5 1069.2L581.1 1067.3L581.7 1066.0L583.4 1064.5L585.1 1063.1L586.3 1062.8L588.6 1062.2L591.7 1060.9L594.0 1059.9L596.7 1060.1L600.7 1061.4L599.7 1062.8L602.1 1062.4L603.8 1063.9L607.3 1063.7L610.3 1065.4L614.3 1066.5L615.1 1068.2L614.5 1069.2L611.4 1069.6L607.3 1068.6L604.8 1068.4L603.8 1067.7L605.6 1069.2L607.8 1071.7L608.0 1072.6L610.4 1073.5L612.6 1073.7L610.6 1071.7L610.3 1071.3L614.4 1072.2L615.4 1072.6L614.2 1070.7L616.3 1068.8L619.3 1069.8L618.5 1067.9L617.8 1065.0L616.7 1064.8L619.5 1065.0L620.9 1066.4L622.3 1067.9L623.7 1066.5L625.2 1065.6L628.8 1065.0L630.2 1065.6L633.7 1065.0L635.9 1064.3L637.1 1062.6L641.7 1063.5L644.6 1064.5L647.9 1065.4L645.2 1063.1L644.5 1062.2L643.3 1059.9L644.0 1057.5L644.6 1056.5L647.0 1056.5L648.8 1057.1L650.4 1060.3L652.5 1064.1L654.7 1066.0L654.3 1068.8L656.0 1066.0L652.7 1061.3L650.7 1058.8L651.3 1056.9L654.9 1057.9L655.9 1057.7L658.8 1058.4L661.5 1059.0L656.9 1055.6L662.8 1054.8L662.4 1052.8L664.9 1051.6L669.7 1050.7L674.7 1049.9L677.3 1047.6L681.6 1049.0L686.6 1049.5L690.7 1050.9L692.6 1052.8L690.4 1054.6L694.3 1055.0L698.1 1055.4L702.8 1056.5L707.1 1055.6L707.2 1055.2L711.7 1055.6L716.5 1057.9L719.6 1060.3L721.7 1059.4L724.4 1059.2L728.1 1059.7L728.0 1058.0L728.8 1056.7L736.0 1057.9L742.4 1059.2L747.0 1060.5L750.7 1060.1L758.1 1062.2L760.3 1063.0L764.3 1062.8L767.8 1062.6L770.6 1062.0L774.0 1064.1L775.1 1062.6L778.4 1062.8L785.3 1064.3L793.6 1070.7L793.5 1072.2L792.2 1072.2L796.1 1074.5L799.5 1076.8L796.3 1076.4L795.1 1077.7L793.4 1079.2L792.6 1081.3L788.4 1080.2L786.1 1080.5L785.0 1081.5L784.8 1083.0L786.5 1085.3L788.8 1088.1L789.5 1090.5L789.8 1094.0L789.1 1096.2L788.3 1098.1L785.1 1095.3L781.6 1091.5L778.8 1087.7L778.0 1085.3L779.2 1083.9L778.8 1082.0L780.0 1080.5L780.5 1078.3L780.1 1076.4L778.8 1077.9L775.6 1077.7L776.8 1079.6L778.0 1080.0L775.7 1077.5L772.6 1077.7L771.2 1078.1L771.3 1081.3L772.5 1082.6L770.1 1083.0L767.0 1082.0L764.1 1082.2L760.0 1082.2L757.0 1082.4L755.4 1084.9L754.4 1087.1L755.2 1090.5L752.7 1091.1L756.8 1092.4L758.5 1092.8L760.5 1092.6L763.4 1094.0L764.7 1096.2L765.2 1098.5L767.4 1101.9L767.6 1102.8L767.0 1106.0L766.0 1109.5L765.3 1112.3L763.0 1113.6L761.0 1113.0L760.0 1114.6L759.4 1116.3L759.7 1117.2L758.4 1118.9L757.8 1120.2L759.7 1121.5L762.5 1124.6L763.4 1126.5L763.5 1128.2L761.7 1128.7L759.8 1129.5L759.0 1127.0L758.4 1124.9L758.0 1123.6L755.9 1123.1L754.4 1122.5L754.6 1121.2L753.7 1119.7L752.5 1119.1L750.6 1119.7L748.5 1121.2L748.2 1119.3L748.6 1117.8L746.5 1117.2L745.5 1119.1L743.3 1120.4L743.1 1121.0L745.0 1122.7L746.3 1124.0L748.5 1123.1L751.7 1123.8L751.2 1124.8L749.3 1126.3L748.3 1128.3L750.4 1129.9L752.2 1132.1L754.2 1134.0L755.0 1136.1L753.2 1137.2L755.8 1138.0L756.1 1141.0L754.8 1141.6L754.1 1145.4L753.2 1147.6L752.4 1148.2L750.7 1150.5L747.0 1152.4L746.0 1152.5L743.4 1153.7L741.3 1154.4L741.3 1156.1L740.1 1153.9L738.2 1153.5L737.3 1153.9L735.9 1155.0L734.5 1158.0L736.2 1161.4L739.4 1164.1L741.5 1168.0L742.1 1171.8L740.3 1174.3L738.8 1175.0L738.0 1176.5L735.7 1178.2L735.1 1176.0L734.6 1174.8L732.9 1174.5L731.7 1172.2L730.1 1170.9L728.2 1170.5L727.4 1169.0L726.6 1169.4L726.7 1171.8L725.8 1174.7L727.2 1176.9L728.4 1180.9L730.6 1182.2L731.8 1183.2L733.4 1186.0L733.5 1187.3L734.9 1191.9L733.8 1192.0L731.6 1190.3L730.1 1188.8L728.9 1186.6L728.3 1184.3L727.8 1182.2L727.1 1181.3L724.7 1179.4L724.8 1176.5L724.9 1175.6L724.4 1171.8L723.6 1168.0L722.0 1163.3L720.6 1162.4L719.7 1163.3L718.4 1164.6L716.7 1164.3L716.5 1161.4L716.4 1159.5L714.4 1157.1L713.4 1156.5L712.2 1155.2L711.5 1154.1L710.9 1152.4L708.9 1152.9L706.6 1153.3L705.0 1153.5L703.4 1153.9L703.4 1155.8L702.9 1156.7L700.8 1158.0L699.4 1159.9L698.4 1161.0L697.0 1162.9L695.4 1164.3L694.0 1165.2L694.0 1168.0L694.4 1169.7L693.9 1172.8L694.0 1175.0L692.8 1176.9L691.6 1177.7L690.5 1179.2L688.8 1177.5L688.1 1175.6L687.3 1173.1L685.5 1170.1L684.0 1166.5L682.3 1162.4L681.1 1158.6L680.6 1155.8L680.3 1154.6L679.6 1152.9L679.5 1154.4L677.8 1155.4L676.1 1154.8L674.2 1152.4L675.7 1151.8L673.7 1150.7L672.6 1149.7L671.2 1149.1L670.4 1147.6L669.4 1146.5L666.2 1146.9L662.8 1147.1L661.6 1146.9L657.4 1146.5L654.6 1145.7L653.5 1143.3L649.9 1144.2L647.4 1143.5L644.9 1142.0L643.5 1139.9L642.1 1137.8L640.3 1137.0L639.6 1137.8L638.9 1138.0L639.0 1138.9L640.0 1140.6L640.6 1142.0L642.2 1143.7L643.0 1144.6L643.3 1145.9L644.4 1147.6L644.3 1146.3L644.5 1145.2L645.5 1146.3L645.6 1148.2L647.2 1148.8L650.2 1148.2L651.5 1146.7L652.6 1145.2L653.0 1144.8L653.3 1147.2L654.5 1149.1L657.2 1149.9L659.3 1152.0L658.1 1155.8L656.8 1158.6L654.8 1160.5L652.5 1162.4L651.1 1162.4L648.1 1164.3L646.2 1165.8L643.2 1167.1L639.9 1169.4L636.7 1170.3L634.2 1170.5L633.7 1169.4L633.1 1166.5L632.4 1163.5L629.5 1158.6L626.3 1153.9L624.0 1149.1L621.3 1145.4L618.9 1141.6L618.4 1138.7L618.2 1138.7L617.5 1142.0L616.3 1141.0L615.7 1140.4L614.7 1138.4L614.5 1137.8ZM340.7 1064.3L342.3 1065.4L343.5 1066.9L346.5 1068.1L346.9 1069.6L343.9 1070.7L339.6 1072.8L338.3 1072.8L336.6 1072.0L337.3 1070.9L334.3 1070.7L335.3 1069.4L333.1 1070.1ZM554.8 1099.8L556.9 1099.4L558.7 1098.7L561.1 1098.7L563.4 1098.6L565.0 1097.9L565.0 1097.4L564.0 1097.2L565.4 1095.1L563.7 1094.3L563.3 1093.2L562.9 1092.3L561.3 1091.3L560.9 1090.5L560.2 1089.0L558.8 1088.7L559.4 1088.1L560.1 1086.6L560.5 1085.6L558.2 1085.4L557.4 1085.6L558.8 1083.7L556.2 1083.7L555.6 1085.1L555.0 1086.2L555.2 1087.7L555.3 1089.0L555.0 1090.0L556.2 1089.4L556.0 1090.5L558.0 1090.7L558.2 1091.9L558.8 1092.8L558.8 1093.6L556.8 1093.8L556.5 1094.7L557.2 1095.3L555.6 1096.4L555.8 1097.0L557.4 1097.0L558.7 1097.4L557.0 1097.7L555.8 1099.1ZM553.9 1095.8L551.6 1096.6L548.9 1097.4L548.2 1096.0L549.2 1095.1L549.5 1094.0L548.7 1093.4L548.9 1092.1L551.0 1091.9L550.8 1091.1L551.5 1090.2L552.8 1089.8L554.5 1090.2L555.3 1091.3L554.4 1092.6L554.4 1093.8L554.5 1095.1ZM533.4 1073.9L536.9 1074.5L538.6 1074.7L542.2 1073.5L544.2 1072.8L545.6 1071.7L544.4 1069.8L544.6 1069.0L542.1 1068.8L539.8 1069.6L537.2 1069.6L535.7 1070.7L534.5 1068.9L532.3 1070.1L531.6 1070.7L534.1 1070.9L534.7 1071.5L532.0 1072.0L534.5 1073.0ZM574.2 1044.6L578.4 1048.0L581.4 1049.9L583.7 1047.1L586.2 1046.1L583.2 1044.2L579.9 1043.3L575.7 1043.7ZM582.0 1043.3L588.6 1044.6L591.4 1043.3L586.0 1042.4ZM632.1 1061.3L627.3 1059.9L624.4 1058.8L624.8 1056.9L626.5 1054.3L627.3 1052.4L630.4 1050.7L635.3 1049.3L639.4 1049.2L637.3 1050.9L632.7 1052.8L630.8 1054.6L629.4 1056.5L629.6 1058.4L632.3 1060.3ZM662.0 1043.3L667.9 1045.6L672.8 1047.3L677.1 1046.1L672.6 1044.4L668.3 1043.3L661.9 1041.0ZM718.8 1052.2L723.4 1053.1L727.5 1052.8L727.4 1051.8L721.2 1050.5L718.3 1050.9ZM729.6 1052.2L733.7 1053.1L735.0 1052.4L731.7 1051.6ZM725.9 1055.8L729.3 1056.2L730.6 1055.8L727.2 1054.8ZM778.1 1060.3L780.1 1060.5L778.5 1059.4L777.3 1059.4ZM612.3 1042.9L617.9 1043.5L621.7 1042.7L625.3 1041.8L626.3 1040.3L621.0 1039.9L614.8 1041.6ZM763.6 1091.7L766.5 1094.7L768.4 1097.2L771.0 1100.0L773.7 1102.1L770.7 1101.3L772.6 1104.7L774.4 1106.0L775.2 1107.4L773.3 1106.2L773.4 1107.7L771.1 1104.7L769.8 1101.9L767.8 1099.1L765.4 1096.2L763.7 1093.6ZM757.5 1146.7L758.3 1147.4L758.3 1149.3L757.9 1153.1L756.3 1151.0L756.3 1148.6L756.8 1147.2ZM739.1 1158.0L740.9 1160.1L742.3 1159.0L742.8 1157.3L741.9 1156.5L740.0 1156.9ZM694.1 1176.0L694.7 1176.0L696.5 1178.4L697.6 1180.9L697.2 1182.4L695.6 1183.3L694.6 1181.6L694.3 1179.0ZM758.8 1159.5L761.4 1159.5L762.1 1162.4L761.9 1164.3L761.4 1166.2L762.5 1168.0L764.6 1168.2L766.0 1169.9L766.3 1170.7L764.8 1169.9L763.4 1168.8L762.0 1168.2L760.9 1168.6L760.1 1167.7L760.5 1166.9L759.5 1166.5L758.5 1164.6L758.2 1163.7L759.1 1163.9L758.8 1161.4ZM769.2 1176.0L770.9 1178.8L771.4 1180.7L770.8 1182.6L770.1 1183.2L769.8 1181.3L769.6 1183.9L767.6 1182.8L767.1 1180.9L766.1 1180.3L763.9 1181.5L764.1 1179.8L765.3 1178.4L766.7 1179.4L767.3 1179.0L768.0 1178.2L768.5 1177.5ZM763.0 1172.2L764.9 1172.8L764.3 1174.7L763.3 1174.7ZM764.8 1173.9L765.8 1174.8L765.5 1177.3L764.2 1176.0ZM766.6 1170.9L768.2 1170.9L769.4 1173.5L768.6 1175.2L767.9 1175.4L767.0 1173.0ZM758.7 1173.1L759.5 1174.5L758.2 1176.4L755.9 1179.0L755.6 1178.4L757.3 1176.0ZM760.0 1169.2L761.3 1169.2L762.0 1170.9L761.3 1171.4L760.5 1170.3ZM742.8 1192.6L743.8 1190.7L746.1 1191.3L746.8 1190.0L749.4 1188.5L750.9 1186.2L752.5 1185.0L754.2 1183.3L755.1 1181.3L756.8 1182.4L757.6 1183.5L759.5 1184.7L757.9 1186.4L756.9 1188.3L757.7 1190.7L759.3 1192.6L757.4 1193.0L756.9 1195.4L755.2 1197.9L754.8 1200.2L754.1 1201.3L752.0 1200.9L749.4 1200.5L747.2 1200.2L744.8 1199.8L744.6 1197.9L743.2 1195.3ZM720.0 1183.9L723.1 1184.7L725.7 1187.4L727.9 1189.2L730.4 1191.3L732.9 1193.6L734.3 1195.4L735.3 1196.4L735.9 1198.8L737.8 1200.2L737.6 1203.0L737.3 1205.5L735.3 1205.5L732.8 1203.6L731.6 1201.7L729.6 1198.8L728.6 1196.3L726.5 1193.9L726.0 1191.2L723.8 1189.2L721.4 1186.7ZM736.2 1207.3L737.6 1205.7L738.9 1206.0L741.7 1207.2L744.8 1207.6L745.6 1206.6L748.5 1208.1L751.2 1209.2L751.1 1210.9L748.9 1210.2L745.6 1210.0L742.4 1209.1L740.2 1209.1L738.1 1208.5ZM751.3 1210.0L753.3 1210.4L752.4 1211.1ZM753.8 1210.4L754.9 1210.4L754.5 1211.3L753.7 1211.1ZM755.1 1210.6L758.7 1210.2L759.0 1210.9L755.3 1211.5ZM760.2 1210.4L765.2 1210.0L764.9 1210.8L760.3 1211.1ZM758.5 1212.5L761.4 1213.2L760.4 1214.0L758.5 1213.0ZM765.8 1214.0L766.8 1212.1L772.4 1210.4L770.9 1211.5L768.4 1212.6L766.6 1214.0ZM760.7 1193.0L762.3 1192.0L765.9 1192.7L769.6 1191.7L768.4 1193.6L766.4 1193.9L762.6 1193.7L761.0 1194.5L761.3 1196.2L763.6 1196.2L766.8 1196.0L764.3 1197.9L763.4 1198.3L764.7 1201.1L765.1 1202.0L765.8 1203.0L765.0 1204.7L763.4 1203.6L762.5 1201.7L762.6 1199.5L761.4 1200.2L761.5 1203.0L761.5 1205.1L759.9 1204.9L760.1 1201.1L759.1 1199.6L759.8 1196.4L760.7 1194.5ZM773.3 1190.7L775.0 1191.7L774.2 1193.6L775.4 1193.9L774.2 1196.0L773.7 1193.6ZM774.1 1200.4L778.7 1200.7L777.4 1201.5L774.1 1201.1ZM779.1 1196.0L781.6 1195.3L784.2 1196.1L784.4 1198.3L784.9 1199.2L786.5 1200.8L788.2 1198.7L790.3 1197.3L791.9 1198.0L795.1 1199.3L797.2 1200.2L799.8 1201.2L801.4 1201.9L803.3 1204.3L805.1 1205.8L806.5 1205.8L806.5 1207.2L805.0 1207.2L806.5 1209.6L807.1 1211.1L808.6 1212.6L810.8 1213.9L809.2 1214.5L807.6 1214.0L804.8 1212.4L803.1 1210.2L800.8 1209.1L799.0 1210.2L798.0 1212.1L796.4 1211.9L794.8 1211.7L793.3 1210.0L791.5 1210.2L790.0 1210.2L789.8 1208.3L791.7 1207.7L791.1 1205.8L789.6 1204.0L787.2 1203.0L785.6 1202.8L783.1 1201.7L782.0 1202.1L781.2 1200.1L783.2 1199.2L780.8 1198.3L779.1 1197.1ZM807.5 1204.9L811.0 1204.9L813.9 1202.4L813.5 1204.0L810.9 1206.2L808.4 1206.2ZM811.7 1199.4L814.5 1201.3L815.4 1203.4L814.7 1202.4ZM828.5 1232.5L831.8 1235.1L832.1 1236.6L830.1 1235.3ZM820.7 1207.2L825.4 1209.6L827.3 1211.5L825.8 1210.8ZM825.3 1212.1L827.1 1213.2L828.2 1214.0L826.3 1213.0ZM835.0 1222.8L835.8 1223.8L836.4 1225.7L835.6 1224.7ZM851.4 1227.4L853.4 1227.8L852.8 1228.9L851.1 1228.7ZM796.9 1214.7L798.1 1218.1L798.0 1221.5L800.2 1222.8L800.4 1226.4L800.4 1230.0L803.3 1232.9L804.0 1234.6L805.8 1237.4L805.4 1238.9L807.4 1241.4L807.9 1243.3L806.7 1246.3L806.6 1248.7L804.1 1252.7L803.5 1253.8L800.6 1256.7L798.8 1258.6L795.5 1262.5L793.8 1265.4L790.4 1266.1L786.8 1268.4L785.3 1267.1L782.6 1267.9L780.1 1267.0L778.4 1265.4L779.2 1262.5L777.1 1261.8L778.3 1260.5L778.9 1256.9L779.0 1255.9L776.8 1258.2L774.4 1260.3L773.4 1259.7L773.1 1256.5L772.8 1255.2L769.1 1254.0L765.7 1254.4L760.6 1255.5L757.0 1256.9L753.1 1258.6L750.2 1258.6L746.1 1260.7L743.3 1260.3L742.2 1259.4L742.6 1257.9L743.7 1257.4L744.7 1255.0L744.4 1252.1L744.7 1248.9L744.2 1244.6L745.3 1241.8L745.1 1239.9L746.1 1237.2L747.2 1235.7L747.6 1237.0L749.5 1235.1L751.9 1233.6L754.9 1232.9L757.3 1232.1L760.2 1230.0L761.6 1228.4L763.2 1225.5L764.1 1227.4L766.0 1224.7L768.0 1221.9L770.5 1220.5L772.4 1222.5L774.5 1222.7L775.4 1220.0L777.3 1218.0L780.1 1217.4L780.5 1215.9L784.3 1217.2L787.3 1217.6L786.3 1220.0L785.0 1221.9L784.2 1222.8L785.6 1224.4L787.1 1225.1L789.3 1226.6L792.0 1227.6L793.5 1224.7L794.5 1221.9L795.4 1218.4L795.9 1216.2ZM782.7 1271.4L785.0 1272.2L787.9 1271.8L786.8 1273.9L785.0 1276.1L782.9 1276.9L781.7 1275.8L781.9 1274.3L782.2 1272.4ZM831.9 1259.5L832.6 1260.7L833.3 1261.6L832.7 1264.1L834.1 1263.5L833.8 1265.4L835.1 1266.3L837.5 1265.8L835.6 1267.6L834.9 1268.6L833.0 1269.2L832.0 1270.7L828.1 1273.1L827.7 1272.6L829.6 1270.5L828.6 1269.2L828.4 1268.8L830.3 1267.8L831.3 1266.3L832.4 1264.4L832.2 1263.3L831.8 1260.7ZM825.4 1271.0L825.1 1272.6L827.1 1272.2L826.4 1273.4L824.7 1274.6L821.9 1276.8L822.0 1277.3L818.5 1278.4L815.8 1281.2L813.0 1282.6L811.3 1282.6L810.6 1281.8L809.3 1281.7L810.8 1280.1L813.2 1278.6L815.3 1277.5L818.2 1276.0L820.2 1275.2L822.3 1273.4L823.9 1272.0ZM576.0 1114.4L577.1 1113.2L577.3 1115.1L576.9 1116.3L576.1 1115.5ZM599.4 1127.4L601.0 1127.6L603.8 1127.8L603.7 1128.3L601.4 1128.5L599.5 1127.9ZM613.2 1128.2L614.2 1127.7L616.6 1127.0L615.8 1128.3L614.3 1129.1L613.4 1128.8ZM566.7 1119.7L567.9 1119.0L568.2 1119.7L567.6 1120.2ZM578.5 1089.2L580.5 1088.5L580.6 1089.4L580.1 1090.5L578.7 1090.2ZM576.7 1089.6L578.1 1089.6L578.0 1090.5L577.0 1090.4ZM587.9 1086.2L589.0 1085.1L588.9 1086.2L588.1 1087.0Z" fill="#dde3ec" stroke="#fff" stroke-width="0.5" stroke-linejoin="round"/><path d="M380.9 1103.0L383.3 1103.2L384.3 1101.9L424.5 1101.9L424.9 1101.1L425.1 1102.5L428.6 1103.2L431.2 1102.6L433.4 1104.0L435.3 1105.5L437.2 1107.6L438.1 1109.5L438.6 1111.3L438.9 1113.4L439.7 1114.7L440.8 1115.3L444.1 1114.0L447.5 1112.7L450.3 1110.8L451.9 1109.5L456.7 1109.5L457.7 1108.9L459.1 1107.2L461.4 1104.9L462.7 1105.1L463.3 1105.5L462.5 1108.1L463.3 1109.3L463.3 1109.8L460.8 1110.8L458.3 1111.7L456.8 1113.2L456.4 1114.2L457.3 1115.5L456.7 1115.9L455.1 1116.1L452.4 1116.6L450.8 1117.6L450.5 1118.1L449.8 1119.7L448.4 1120.8L447.9 1120.0L447.9 1121.7L446.1 1124.2L445.4 1124.6L445.7 1125.1L445.8 1127.8L443.9 1128.9L441.5 1130.4L439.2 1131.8L436.0 1134.0L434.7 1136.5L434.5 1138.2L435.2 1140.8L435.5 1143.8L434.7 1146.5L433.5 1147.1L432.3 1145.4L431.4 1142.0L432.0 1139.7L430.9 1138.0L429.8 1137.8L428.1 1138.4L426.5 1137.0L424.1 1137.2L421.9 1137.4L421.7 1139.7L420.1 1139.5L418.5 1138.9L414.7 1138.4L413.1 1138.9L410.0 1141.0L408.4 1142.3L407.4 1145.4L404.8 1144.6L404.7 1142.5L403.8 1141.0L402.7 1138.2L400.6 1138.4L399.5 1139.7L397.7 1138.6L397.6 1136.7L395.7 1134.4L393.0 1134.4L392.8 1135.3L388.2 1135.3L383.1 1133.1L379.5 1133.1L379.5 1131.9L378.3 1130.6L378.2 1130.2L377.3 1129.9L375.5 1129.3L375.8 1128.0L374.8 1125.3L374.7 1123.1L374.1 1122.7L373.9 1120.2L373.9 1118.1L375.5 1115.5L375.8 1113.6L377.5 1111.3L379.9 1107.2L380.2 1106.0ZM390.2 1063.0L388.2 1062.0L382.8 1061.4L379.4 1060.7L375.3 1059.6L371.0 1060.7L364.0 1062.4L357.7 1064.3L357.5 1066.7L356.7 1067.7L357.8 1068.8L354.0 1068.8L347.9 1070.5L347.8 1072.4L352.2 1072.8L355.3 1072.0L353.0 1074.5L350.6 1074.5L345.9 1076.2L342.4 1078.1L341.1 1080.2L341.9 1081.3L344.6 1081.3L342.2 1083.7L347.4 1083.4L349.2 1083.6L346.4 1085.8L340.6 1088.7L336.0 1090.0L331.6 1091.3L334.3 1091.1L338.8 1090.0L342.7 1088.7L347.1 1086.8L352.4 1084.3L355.3 1082.4L359.6 1079.6L362.3 1078.8L362.7 1079.4L357.9 1082.2L361.3 1081.5L363.6 1081.1L367.1 1079.4L368.1 1080.5L369.0 1081.1L372.4 1081.1L374.0 1081.9L375.8 1083.4L377.7 1083.7L378.7 1085.6L379.2 1088.1L380.0 1090.0L380.3 1090.7L381.1 1090.2L381.9 1088.8L380.6 1087.3L380.7 1084.1L379.8 1082.4L376.2 1083.0L375.7 1081.1L373.5 1080.5ZM350.8 1085.6L354.2 1084.9L353.7 1086.0L350.5 1087.1ZM338.7 1074.5L341.8 1074.9L339.9 1075.4ZM338.0 1080.7L340.3 1080.5L339.0 1081.5ZM310.2 1157.2L310.8 1156.2L311.9 1157.1L312.1 1157.6L310.5 1158.8L310.1 1158.4ZM309.7 1155.0L310.8 1155.2L310.2 1155.6ZM307.5 1153.9L308.5 1153.7L308.3 1154.2L307.7 1154.2ZM305.4 1152.7L306.2 1152.5L306.0 1153.1Z" fill="#3366ff" stroke="#fff" stroke-width="0.5" stroke-linejoin="round"/><path d="M390.2 1063.0L392.5 1063.1L395.0 1064.3L398.0 1063.1L403.2 1062.2L407.6 1061.4L408.6 1061.1L409.7 1063.1L415.1 1062.6L418.6 1064.1L420.6 1065.4L421.7 1066.4L426.8 1066.2L429.0 1065.0L432.7 1065.0L436.1 1066.4L439.8 1066.4L442.0 1065.0L443.6 1065.4L445.8 1063.1L446.0 1061.3L450.6 1058.4L451.5 1060.3L450.4 1062.8L451.3 1064.1L453.4 1063.7L453.4 1065.6L455.5 1066.4L458.1 1063.1L459.1 1062.6L462.6 1062.8L462.1 1065.0L458.4 1068.8L455.3 1069.8L453.7 1068.8L451.3 1071.1L448.0 1073.5L444.9 1074.3L440.5 1077.3L437.2 1079.6L434.2 1083.0L436.4 1083.6L435.4 1086.8L438.8 1086.8L441.1 1087.7L444.3 1090.0L447.9 1090.4L446.2 1094.3L446.7 1095.8L447.5 1097.5L449.9 1097.0L451.0 1094.7L451.8 1092.1L455.6 1089.6L456.8 1088.1L457.9 1085.8L456.2 1083.4L457.9 1081.1L459.9 1078.3L460.1 1076.6L463.3 1076.8L465.7 1077.3L467.7 1078.8L470.0 1079.2L469.0 1082.0L469.6 1083.9L472.5 1083.4L476.3 1080.5L477.3 1083.4L477.9 1086.2L478.8 1089.0L481.0 1090.9L482.5 1093.0L483.5 1095.3L482.0 1097.2L479.0 1097.7L476.4 1099.4L472.0 1099.4L466.9 1099.6L464.2 1101.5L460.9 1103.8L458.1 1106.0L460.2 1105.1L463.8 1102.8L467.1 1101.5L469.4 1102.1L467.9 1103.8L466.0 1103.8L468.0 1104.5L467.3 1107.0L468.6 1107.6L471.9 1107.9L474.2 1105.9L474.5 1107.6L472.4 1108.9L468.4 1110.2L464.7 1112.5L464.0 1111.3L467.2 1109.1L465.0 1108.9L463.3 1109.3L462.5 1108.1L463.3 1105.5L462.7 1105.1L461.4 1104.9L459.1 1107.2L457.7 1108.9L456.7 1109.5L451.9 1109.5L450.3 1110.8L447.5 1112.7L444.1 1114.0L440.8 1115.3L439.7 1114.7L438.9 1113.4L438.6 1111.3L438.1 1109.5L437.2 1107.6L435.3 1105.5L433.4 1104.0L431.2 1102.6L428.6 1103.2L425.1 1102.5L424.9 1101.1L424.5 1101.9L384.3 1101.9L384.0 1101.3L382.7 1099.6L380.3 1098.3L380.4 1096.2L380.6 1094.3L379.7 1092.4L380.2 1091.1L381.0 1090.5L382.2 1088.8L380.7 1087.3L380.9 1084.1L380.1 1082.4L376.2 1083.0L375.7 1081.1L373.5 1080.5ZM382.8 1103.0L380.9 1102.3L379.6 1100.8L378.2 1098.9L379.6 1098.3L381.7 1099.6L382.9 1101.3ZM375.6 1092.3L377.3 1092.4L375.9 1095.7L375.2 1094.3ZM476.0 1104.5L478.7 1104.5L480.8 1105.9L484.1 1106.4L485.7 1104.7L484.9 1102.8L484.9 1100.9L482.7 1100.0L483.5 1097.0L481.0 1098.5L478.9 1100.9L476.3 1103.4ZM485.2 1068.4L482.9 1070.7L478.8 1074.5L477.3 1076.4L474.9 1077.5L472.7 1076.4L469.6 1074.5L467.3 1072.6L462.5 1073.0L462.9 1071.1L468.2 1070.7L469.8 1068.8L472.0 1066.9L471.0 1065.4L468.6 1064.1L467.3 1062.2L463.2 1061.8L459.7 1061.6L456.3 1061.3L455.6 1059.7L455.9 1058.4L458.6 1055.6L463.1 1055.0L467.7 1055.0L468.5 1056.5L471.4 1056.5L473.5 1056.9L474.6 1059.0L477.5 1060.3L479.5 1062.2L480.3 1064.1L483.0 1066.4ZM421.2 1061.3L421.6 1063.5L424.2 1064.8L429.4 1064.5L433.9 1064.3L437.9 1063.1L440.1 1061.8L436.8 1060.7L438.9 1057.5L436.5 1056.2L432.3 1056.9L429.1 1056.0L423.7 1057.3L421.1 1059.4ZM414.1 1058.0L415.0 1060.1L419.3 1059.4L422.3 1057.5L426.7 1056.0L427.3 1054.3L423.2 1053.7L418.4 1055.0ZM464.6 1050.1L473.2 1050.5L476.6 1049.0L481.4 1046.1L484.7 1045.2L492.0 1042.4L498.9 1039.9L500.8 1038.6L493.6 1037.4L483.6 1037.6L475.2 1039.1L469.8 1040.5L471.2 1042.4L471.6 1044.2L468.9 1046.1L465.2 1048.0ZM461.9 1043.3L462.4 1046.1L468.3 1045.6L471.4 1043.3L469.3 1041.0L464.8 1041.4ZM471.1 1053.5L464.1 1053.7L457.9 1053.5L458.1 1051.8L456.1 1049.5L462.5 1049.9L468.2 1051.2L472.6 1051.4ZM430.3 1052.4L434.2 1053.7L441.0 1053.1L443.9 1051.2L441.6 1049.5L436.2 1050.5L432.5 1050.3ZM442.4 1057.5L444.3 1059.6L448.3 1057.5L449.7 1055.0L446.4 1054.8ZM451.9 1055.2L450.1 1058.2L452.3 1058.4L456.7 1056.5L457.6 1054.6L455.0 1054.3ZM450.1 1074.3L453.0 1076.2L457.2 1074.5L458.7 1073.5L457.2 1072.0L455.7 1070.1L454.0 1069.8L452.3 1071.7L450.1 1073.2ZM445.1 1051.8L451.6 1052.8L453.6 1049.9L448.0 1049.9ZM425.2 1050.3L428.7 1051.2L434.1 1049.3L432.2 1048.0ZM450.2 1046.5L453.6 1047.5L456.5 1045.6L453.2 1044.6ZM440.2 1064.1L442.8 1064.8L445.2 1064.1L443.8 1062.6ZM469.6 1100.2L473.0 1101.1L473.3 1101.7L470.8 1101.3ZM468.2 1105.9L471.5 1106.6L470.5 1107.6L468.5 1106.8Z" fill="#abc4ec" stroke="#fff" stroke-width="0.5" stroke-linejoin="round"/><path d="M775.2 1116.3L776.3 1115.5L775.0 1114.2L775.5 1114.6L776.8 1114.2L779.3 1115.3L779.9 1113.2L781.7 1112.7L779.8 1110.7L778.7 1111.3L776.0 1110.0L773.5 1108.5L774.3 1110.4L774.8 1111.5L774.9 1112.7L773.4 1112.6L773.8 1114.7ZM776.1 1116.1L777.1 1116.3L778.0 1118.0L779.6 1119.7L780.0 1122.1L780.3 1124.6L781.3 1127.0L780.4 1128.5L779.7 1127.2L779.1 1128.0L779.0 1129.1L778.0 1129.1L776.2 1129.1L775.7 1128.3L776.2 1129.7L775.1 1131.3L773.5 1129.9L773.6 1128.9L771.5 1129.1L769.2 1129.6L767.1 1130.3L766.9 1129.3L767.4 1129.1L768.8 1127.5L771.0 1127.2L773.4 1127.2L773.4 1125.9L773.5 1124.0L774.3 1123.6L774.4 1124.9L775.9 1124.2L776.5 1122.7L776.9 1121.0L775.8 1119.1L775.6 1117.8L775.5 1116.6L776.4 1117.2ZM769.3 1131.5L770.0 1130.5L771.7 1129.6L772.9 1130.2L772.8 1131.7L771.5 1131.2L771.3 1132.7L770.2 1132.1ZM767.2 1130.4L768.6 1131.0L769.6 1132.3L769.6 1135.2L768.8 1135.9L768.0 1135.4L767.4 1134.0L767.5 1132.7L766.3 1132.7L765.8 1131.8L766.6 1131.0Z" fill="#5b8ff2" stroke="#fff" stroke-width="0.5" stroke-linejoin="round"/><path d="M582.0 1122.7L583.6 1122.3L586.9 1122.2L586.3 1124.0L586.6 1124.6L586.3 1125.1L584.9 1124.5L582.8 1123.4ZM575.4 1117.0L576.9 1116.4L577.9 1118.0L577.7 1120.4L576.8 1120.8L575.8 1120.4L575.8 1118.3Z" fill="#8fb2ee" stroke="#fff" stroke-width="0.5" stroke-linejoin="round"/><path d="M567.8 1114.4L567.8 1115.3L566.3 1116.3L564.2 1117.6L563.0 1119.1L562.5 1120.0L563.3 1121.2L562.2 1122.1L561.9 1123.4L560.1 1124.8L559.6 1125.1L556.2 1125.1L554.8 1126.1L554.3 1126.5L553.3 1125.5L552.4 1124.2L551.6 1124.2L551.5 1123.4L552.3 1122.3L551.9 1120.0L552.5 1118.9L552.7 1117.0L553.6 1115.9L553.0 1115.2L550.6 1114.9L549.6 1115.3L549.6 1114.9L549.0 1113.4L550.4 1112.5L551.5 1111.7L554.3 1112.1L557.3 1112.3L560.3 1112.5L561.9 1113.4L564.1 1113.6L565.6 1114.2Z" fill="#abc4ec" stroke="#fff" stroke-width="0.4" stroke-linejoin="round"/><path d="M572.9 1093.6L574.6 1093.2L575.3 1092.6L575.4 1091.9L575.0 1090.7L576.3 1090.7L577.0 1091.5L578.5 1091.7L578.2 1092.4L579.2 1092.4L580.0 1092.1L580.6 1091.5L581.8 1091.1L582.4 1092.3L583.0 1092.6L583.4 1093.8L583.0 1094.7L583.8 1096.0L584.1 1097.2L584.6 1098.1L583.6 1098.1L581.8 1099.2L580.5 1099.4L581.1 1100.6L583.1 1102.3L582.0 1103.2L581.8 1104.3L579.2 1104.9L578.0 1105.1L577.1 1104.7L575.6 1104.3L574.1 1104.5L574.9 1101.9L572.3 1100.9L571.8 1099.8L571.6 1098.5L571.9 1097.4L571.6 1096.6L572.7 1095.8L573.0 1095.1L573.2 1094.0Z" fill="#73a2ee" stroke="#fff" stroke-width="0.4" stroke-linejoin="round"/><path d="M583.2 1108.3L581.3 1108.9L581.5 1111.0L583.2 1112.1L584.4 1114.4L587.0 1115.3L587.2 1116.3L588.8 1116.8L591.2 1118.7L590.9 1119.3L589.1 1118.1L588.3 1119.5L589.2 1120.8L588.5 1121.9L587.7 1122.9L587.0 1122.5L587.3 1121.4L587.6 1120.2L586.8 1118.9L585.7 1118.3L584.5 1117.4L582.7 1116.4L581.4 1115.5L579.7 1114.4L578.8 1113.2L578.4 1112.3L577.6 1111.2L576.3 1110.6L575.0 1111.5L574.1 1111.7L573.5 1111.0L573.3 1109.3L573.4 1107.7L574.8 1107.6L575.5 1106.8L576.7 1106.6L578.5 1105.9L581.0 1105.7L583.2 1106.6Z" fill="#8fb2ee" stroke="#fff" stroke-width="0.4" stroke-linejoin="round"/><path d="M567.9 1097.4L568.7 1096.2L569.7 1094.5L570.6 1093.8L572.8 1093.6L573.2 1094.0L573.0 1095.1L572.7 1095.8L571.6 1096.6L571.9 1097.4L571.6 1098.5L571.2 1098.5L570.2 1097.4L569.2 1097.4Z" fill="#abc4ec" stroke="#fff" stroke-width="0.4" stroke-linejoin="round"/><path d="M446.0 1172.2L443.0 1177.1L444.0 1180.5L447.8 1181.3L451.8 1182.8L451.2 1186.9L452.5 1190.7L452.6 1192.2M452.6 1192.2L447.8 1191.3L448.5 1196.4L447.6 1202.4M433.0 1191.9L436.0 1193.9L438.8 1194.7L441.8 1198.8L447.6 1202.4M438.8 1194.7L438.3 1197.3L434.4 1201.1L432.8 1204.0L430.6 1200.9M464.3 1178.4L462.0 1183.2L463.0 1184.7L457.5 1186.9L457.4 1190.7L452.6 1192.2M463.0 1184.7L464.4 1186.0L464.8 1191.7L469.8 1190.9L473.1 1190.2L476.4 1189.8L477.8 1186.6M468.8 1183.2L468.2 1188.3L469.8 1190.9M474.0 1183.5L473.1 1190.2M447.6 1202.4L442.7 1204.0L442.4 1205.8L441.2 1208.7L443.4 1212.3L447.2 1212.5L447.2 1215.3L449.0 1215.3M449.0 1215.3L450.6 1215.3L455.7 1213.0L455.9 1216.2L458.2 1218.1L463.2 1220.0L464.9 1225.1L468.0 1225.3L469.6 1228.5L468.9 1232.5M449.0 1215.3L450.3 1218.7L450.3 1222.8L449.7 1224.7L450.0 1227.6L448.8 1229.3M450.0 1227.6L452.0 1231.4L452.9 1235.1L454.8 1237.6L458.2 1236.3L461.7 1236.1L462.2 1233.2L462.9 1231.7L467.3 1231.0L468.9 1232.5M468.9 1232.5L469.8 1236.3L473.2 1236.6L473.9 1239.9L475.8 1240.0L475.7 1242.9M462.1 1236.5L466.7 1239.9L470.8 1242.3L469.7 1246.1L473.8 1246.1L475.7 1242.9M475.7 1242.9L477.3 1245.7L474.4 1248.0L472.1 1251.6L474.8 1252.7L479.2 1255.9L479.7 1258.2M472.1 1251.6L471.8 1255.9L471.9 1258.8M454.8 1237.6L453.2 1240.8L454.2 1245.5L452.7 1251.2L453.5 1256.9L453.9 1262.5L454.2 1267.3L454.1 1272.0L455.8 1277.7L457.5 1282.4L457.5 1287.1L459.1 1290.9L464.6 1293.2L465.4 1293.9M465.4 1294.1L466.9 1298.3M412.4 1167.1L413.8 1164.3L415.5 1164.1L414.9 1162.0L415.1 1160.9L418.0 1160.9L419.5 1160.5M418.0 1160.9L417.6 1164.4L418.2 1164.4M417.4 1166.2L416.9 1167.3L415.7 1168.4M417.4 1166.2L418.3 1168.2L419.4 1169.9M420.1 1169.9L422.4 1168.2L424.5 1166.5L427.2 1166.2M422.4 1173.5L424.0 1173.7L425.7 1173.9M426.6 1179.2L426.8 1176.5L427.3 1176.4M442.0 1159.7L446.7 1157.3L446.4 1161.0M559.9 1128.2L560.3 1132.1L561.1 1133.8L557.5 1135.9L554.3 1138.2L549.2 1140.3L549.2 1142.7M542.0 1142.1L549.2 1142.1M549.2 1142.7L549.1 1145.4L543.8 1145.4L543.7 1150.3L542.1 1151.0L542.0 1154.2L535.5 1154.2M549.2 1142.7L555.3 1147.2L564.9 1154.6L568.2 1157.1L568.4 1158.6L569.8 1158.4L572.4 1157.6L575.1 1155.0L582.3 1150.1M582.3 1150.1L578.9 1148.2L578.2 1144.6L578.8 1142.5L578.5 1138.7L578.0 1137.2L577.3 1133.8L574.7 1130.6L575.9 1128.3L576.3 1124.8M578.0 1137.2L579.2 1134.6L581.0 1131.9M602.3 1134.8L603.5 1156.7L601.9 1156.7L601.9 1157.6L588.7 1150.3L587.1 1151.0L585.9 1151.8L582.3 1150.1M603.3 1152.9L622.5 1152.9M555.3 1147.2L552.8 1153.3L554.0 1163.3L554.4 1165.2L547.5 1165.2L544.2 1165.0L543.1 1166.5L539.4 1163.1L536.1 1164.3M569.8 1158.4L569.8 1163.3L568.7 1165.2L564.6 1166.2L563.3 1166.3L559.7 1167.7L556.5 1169.4L554.3 1172.2L554.0 1174.8L549.9 1175.2L549.4 1173.7L548.3 1171.3L544.3 1171.1L543.1 1166.5M587.1 1151.0L588.0 1154.8L588.2 1162.6L585.1 1167.1L585.2 1168.6L579.4 1169.4L574.5 1169.9L569.5 1169.0L568.9 1172.4L566.9 1171.3L564.5 1169.0L563.3 1166.3M568.9 1172.4L567.6 1177.5L567.4 1182.4M564.5 1173.7L565.6 1182.8M563.0 1173.5L563.8 1178.4L565.0 1183.0M558.4 1173.7L558.6 1179.4L557.9 1184.9M554.0 1174.8L558.4 1175.6L558.4 1173.7L563.0 1173.5L564.5 1173.7L566.9 1171.3M550.6 1186.2L549.3 1182.2L549.0 1180.1L549.9 1175.2M544.1 1181.5L546.1 1178.4L549.0 1180.1M541.1 1177.5L545.4 1175.6L546.1 1178.4M538.4 1173.7L540.5 1172.4L540.6 1170.7L535.6 1171.1M540.6 1170.7L544.3 1171.1M535.5 1168.8L538.5 1168.4L540.4 1169.2L538.5 1169.6L535.5 1169.7M577.0 1185.6L579.1 1181.6L582.4 1181.3L584.4 1176.5L586.3 1171.8L586.7 1169.9L585.2 1168.6M601.9 1157.6L602.1 1164.8L599.8 1168.0L599.0 1170.5L600.6 1173.7L594.2 1177.5L588.5 1180.3L586.0 1175.6L587.6 1173.7L586.7 1169.9M588.5 1180.3L586.9 1185.0L589.7 1190.3L593.7 1187.9L593.5 1186.0L600.1 1186.8L604.2 1184.7L608.2 1184.9M600.6 1173.7L602.5 1178.1L608.2 1184.9L611.6 1186.0L613.8 1187.9L614.1 1187.5L619.1 1186.6L620.7 1185.0M602.5 1178.1L603.2 1176.0L609.0 1176.5L612.3 1175.2L615.4 1171.8L617.4 1171.4L617.2 1175.6L619.0 1176.5L617.3 1179.4L620.7 1185.0M619.0 1176.5L619.3 1173.9L620.4 1171.8L622.5 1168.0L622.6 1166.2L625.6 1160.5M622.7 1167.5L628.4 1167.1L632.5 1170.9L633.6 1170.5M632.5 1170.9L631.6 1173.7L633.8 1172.8M633.4 1173.7L635.3 1177.5L640.3 1179.4L642.0 1179.4L637.2 1185.0L632.2 1186.9L628.1 1188.1L622.3 1186.2L620.7 1185.0M632.2 1186.9L630.6 1189.2L630.6 1196.0L631.5 1197.7M619.1 1186.6L620.7 1191.7L619.1 1194.1L619.1 1196.4L625.2 1200.4L627.6 1203.4M613.8 1187.9L614.6 1190.3L611.8 1194.5L611.8 1197.1L613.3 1196.4L619.1 1196.4M611.8 1197.1L610.8 1199.6L611.5 1203.0L611.7 1206.8L613.7 1210.2L617.1 1212.3L618.9 1212.5L620.2 1216.4L624.5 1216.6L629.3 1214.3M610.8 1199.6L613.8 1199.0L613.3 1196.4M611.5 1203.0L613.8 1199.0M613.7 1210.2L610.5 1210.6L609.7 1212.1L609.9 1217.2L611.8 1217.6L611.8 1219.8L607.6 1216.4L602.4 1215.3L602.3 1219.1L599.0 1219.1L599.1 1215.3L598.9 1208.3L595.1 1207.7L591.0 1208.3L590.3 1205.7L584.4 1205.7L583.3 1206.0M582.2 1227.0L585.8 1227.4L593.1 1227.4L597.1 1228.3L601.1 1227.8L604.0 1228.1M599.0 1219.1L598.9 1225.1L601.1 1227.8M597.1 1229.1L596.9 1236.1L595.3 1236.1L594.7 1248.2L589.2 1248.6M595.0 1241.4L596.0 1245.2L599.5 1242.3L603.8 1243.1L606.4 1239.1L610.4 1236.5L607.8 1233.2L604.0 1228.1M604.0 1228.1L606.9 1228.5L610.1 1224.7L612.6 1224.0L616.6 1226.1L615.9 1232.3L613.4 1236.8L610.4 1236.5M613.4 1236.8L614.3 1240.8L614.0 1243.5L615.4 1245.2M614.0 1243.5L612.5 1243.6L612.1 1245.2L613.0 1246.1L614.0 1245.2M612.6 1224.0L612.3 1222.5L617.0 1221.0L617.1 1212.3M617.0 1221.0L619.4 1221.9L621.5 1224.7L620.5 1226.8L618.9 1224.7L619.2 1221.7L620.2 1216.4M605.7 1250.4L608.2 1248.6L609.5 1250.3L607.5 1252.3L605.7 1250.4M579.2 1190.2L584.9 1190.3L589.7 1190.3M578.8 1192.6L581.6 1192.6L581.6 1190.2M584.9 1190.3L586.9 1191.9L586.8 1198.1L583.6 1199.2L581.3 1201.9M593.7 1187.9L592.4 1195.4L589.4 1201.1L586.7 1203.8L584.4 1203.2L582.8 1204.0M566.6 1097.9L569.1 1100.0L571.4 1100.9L572.3 1100.9M571.4 1100.9L571.8 1099.8M571.9 1107.2L573.3 1104.9L574.1 1104.5M571.9 1107.2L573.4 1107.7M577.1 1104.7L578.5 1105.9M583.1 1102.3L584.8 1101.9L587.8 1102.5L588.0 1103.8L586.7 1105.9L583.2 1106.6M584.6 1098.1L587.2 1099.2L590.3 1100.9L587.8 1102.5M590.3 1100.9L595.7 1101.7M588.0 1103.8L590.5 1104.2L595.3 1103.0M590.8 1091.7L595.1 1091.7L596.2 1092.6L597.0 1094.9L596.8 1097.2L597.6 1099.1L595.9 1101.7L595.3 1103.0M595.1 1091.7L593.8 1090.4L592.6 1090.0M592.2 1088.5L597.5 1087.9L600.1 1089.2M596.3 1085.1L600.7 1085.8M601.2 1082.2L600.7 1085.8L602.1 1088.3L600.1 1089.2L599.1 1090.7L596.2 1092.6M602.1 1088.3L606.2 1089.2L609.3 1093.6L608.4 1096.0L601.7 1097.0L596.8 1097.2M608.4 1096.0L612.2 1096.6L614.4 1099.2L618.0 1100.2L621.1 1100.8L621.2 1104.2L619.2 1105.5M595.3 1103.0L599.5 1104.3L601.9 1103.2L604.8 1108.5L607.1 1109.1M601.9 1103.2L605.8 1104.0L607.4 1106.8L604.8 1108.5M595.3 1103.0L596.5 1104.0L594.0 1107.2L593.0 1107.4L590.8 1107.7L587.5 1106.6L586.7 1105.9M594.0 1107.2L594.9 1109.8L596.9 1111.0L603.3 1111.2L605.8 1111.9M596.9 1111.0L596.8 1114.6L597.7 1116.4L602.4 1116.4L602.9 1115.7L605.3 1115.1M602.9 1115.7L602.5 1117.6M593.5 1119.5L594.9 1117.4L597.7 1116.4M592.3 1115.3L593.9 1114.7L594.1 1117.0L594.9 1117.4M593.9 1114.7L596.8 1114.6M583.2 1108.5L585.7 1108.5L587.5 1106.6M586.5 1109.1L586.9 1111.3L589.4 1113.2L590.9 1114.2M586.5 1109.1L591.3 1109.5L592.1 1112.3L590.9 1114.2M591.3 1109.5L593.0 1107.4M592.1 1112.3L593.8 1113.6L593.9 1114.7M592.3 1115.3L592.1 1112.3M578.5 1083.0L579.6 1079.2L579.0 1075.4L581.1 1072.6L582.1 1069.4L584.2 1066.0L588.0 1064.1M588.0 1064.1L592.6 1066.2L593.6 1069.8L593.9 1070.1M588.0 1064.1L594.6 1063.0L597.1 1062.2L598.8 1064.1L599.7 1062.8M598.8 1064.1L600.6 1066.5L601.1 1071.8L604.4 1075.6L600.6 1080.2M623.0 1112.5L628.5 1114.0L633.2 1115.3L636.3 1115.5M625.8 1116.1L628.9 1116.8L633.5 1116.8L633.2 1115.3M628.9 1116.8L631.3 1119.5M631.2 1116.6L634.1 1120.8L634.1 1121.0M551.5 1090.5L553.3 1091.9L554.1 1092.3M635.3 1106.8L631.8 1103.8L630.9 1102.8L631.5 1099.1L636.0 1097.0L642.1 1098.1L647.1 1097.9L651.2 1097.5L649.6 1094.3L654.4 1091.7L659.4 1090.0L663.0 1092.1L666.6 1092.4L670.7 1092.1L672.8 1093.8L678.1 1098.3L683.0 1098.1L689.9 1101.5M689.9 1101.5L695.4 1098.5L704.8 1100.0L703.4 1096.2L709.7 1097.5L710.8 1099.1L717.8 1100.0L724.1 1101.1L728.4 1099.6L732.0 1100.4M732.0 1100.4L733.9 1100.9L735.1 1099.4L735.0 1095.3L733.7 1093.8L737.7 1093.4L742.1 1094.7L747.1 1099.4L755.0 1104.3L757.5 1103.6L760.1 1103.0L760.8 1109.5L758.0 1109.8L759.8 1112.5L760.0 1114.6M690.7 1101.7L698.1 1109.1L705.4 1110.8L707.9 1113.8L715.1 1114.2L721.8 1115.9L728.5 1113.8L730.7 1111.9L729.4 1109.5L734.4 1108.7L734.2 1106.6L739.6 1106.2L735.1 1104.3L732.6 1104.0L732.0 1100.4M689.9 1101.5L688.8 1105.7L685.0 1105.3L685.2 1108.9L682.4 1109.5L683.9 1114.7M683.9 1114.7L681.8 1113.6L674.1 1112.9L669.9 1114.2L666.2 1117.4L663.8 1116.8L662.1 1113.2L654.0 1110.6L649.9 1108.3L646.3 1109.5L647.8 1116.4L644.4 1114.6L642.3 1115.7M683.9 1114.7L679.5 1117.2L675.5 1119.8L675.8 1121.9L678.4 1124.2L683.6 1127.4L686.0 1129.7L686.5 1133.1L688.2 1135.9L690.9 1137.4L696.1 1139.9L699.7 1141.6L703.0 1141.8M669.9 1114.2L669.7 1116.4L673.8 1117.4L675.5 1119.8M666.2 1117.4L670.3 1118.5L669.7 1116.4M675.5 1119.8L670.6 1119.8L668.4 1118.5L666.2 1117.4M670.6 1119.8L666.6 1120.4L667.8 1124.6M690.9 1137.4L690.0 1140.1L695.1 1142.7L703.6 1144.6L703.0 1141.8M704.4 1142.9L705.6 1141.2L708.6 1142.0L709.6 1143.7L704.9 1143.8L704.4 1142.9M708.6 1142.0L711.9 1139.3L715.0 1139.1L717.5 1141.2M678.5 1124.6L678.1 1128.9L679.8 1133.1L680.5 1135.9L677.3 1141.8L674.5 1143.5L676.7 1148.2L672.6 1149.7M678.4 1124.2L673.5 1125.9L674.0 1130.2L671.7 1132.1L671.8 1134.2L667.7 1135.5L667.8 1138.0L661.9 1138.9L659.3 1138.2M661.6 1146.9L663.6 1143.1L662.7 1141.0L659.3 1138.2L660.2 1135.2L657.8 1132.1L657.9 1127.2M646.0 1124.0L650.5 1122.3L654.3 1123.6L657.9 1127.2L662.7 1125.9L665.4 1123.8L667.8 1124.6L670.7 1123.4L672.8 1122.7L673.5 1125.1L678.4 1124.2M647.8 1116.4L651.0 1113.8L653.5 1114.7L656.8 1116.8L661.7 1121.0L665.4 1123.8M639.6 1137.8L638.1 1135.9L635.0 1132.1L633.8 1130.2L634.8 1128.2L633.3 1126.5L632.0 1124.2L630.2 1120.0L631.3 1119.5L634.1 1121.0L636.2 1119.7L638.0 1121.9M618.7 1126.5L619.6 1124.9L621.6 1124.9L624.7 1124.9L628.4 1124.4L632.0 1124.2M628.4 1124.4L627.1 1128.9L623.6 1131.4L624.5 1133.6L621.2 1135.0L622.9 1136.9L622.2 1137.8L620.0 1139.3L618.4 1138.7M624.5 1133.6L629.1 1135.7L633.8 1139.3L636.7 1139.5L638.3 1137.6L638.9 1138.0M636.7 1139.5L638.4 1140.6L640.0 1140.6M623.6 1131.4L619.4 1133.1L618.6 1131.6L620.0 1129.9L619.0 1129.1M618.6 1131.6L617.9 1131.9M619.4 1133.1L618.6 1133.1L618.8 1135.0L618.4 1138.7M617.0 1135.3L618.2 1138.7M632.7 1163.5L633.4 1161.4L637.9 1162.0L641.0 1160.5L647.4 1158.6L652.1 1156.7L652.8 1152.9L651.9 1151.6L647.7 1151.2L645.8 1148.8M647.4 1158.6L649.5 1163.1M651.9 1151.6L652.9 1149.1L652.9 1147.4M712.2 1155.2L713.2 1152.5L712.8 1149.1L714.5 1146.3L714.8 1144.0L717.5 1141.2L720.0 1142.3L720.8 1145.7L719.5 1149.1L722.6 1152.9L724.6 1153.9L726.5 1154.4M725.0 1156.1L721.8 1157.3L721.8 1160.5L723.8 1163.7L723.3 1166.2L725.5 1170.7L725.4 1173.7L724.9 1175.6M724.6 1153.9L725.0 1156.1M706.6 1153.3L705.5 1148.6L704.0 1145.7L704.2 1144.6L706.5 1145.4L706.7 1146.7L711.0 1147.2L709.4 1149.1L710.1 1151.0L711.3 1149.7L712.5 1154.2L712.2 1155.2M737.3 1153.9L734.7 1152.0L732.3 1150.5L728.9 1152.0L727.5 1152.2L727.4 1154.4L726.5 1154.4M727.5 1152.2L731.3 1155.9L733.2 1158.6L733.9 1159.9L737.4 1163.7L738.6 1166.7M725.0 1156.1L725.9 1157.6L727.0 1157.6L727.2 1161.2L728.9 1160.1L731.9 1159.9L733.6 1163.3L735.6 1167.3M731.7 1172.2L730.5 1168.8L732.9 1167.3L735.6 1167.3L738.6 1166.7L739.1 1171.3L736.9 1173.7L734.6 1174.8M727.8 1182.2L729.4 1183.5L731.2 1182.8M756.9 1123.2L759.7 1121.5M752.4 1118.9L754.7 1115.5L756.3 1115.1L758.4 1114.4L760.0 1114.6M743.8 1190.7L745.5 1192.8L749.4 1191.9L752.4 1190.3L753.4 1186.9L756.9 1186.6M795.6 1199.4L794.8 1211.7M766.8 1212.1L768.4 1211.9L768.7 1212.6" fill="none" stroke="#fff" stroke-width="0.55" stroke-linejoin="round" stroke-opacity="0.9"/><path d="M633.6 1109.5L633.3 1111.7L634.4 1113.3L635.9 1115.1L637.7 1117.0L639.6 1118.1L638.4 1119.8L638.1 1121.7L638.4 1123.4L639.3 1123.7L641.7 1124.9L644.0 1125.1L646.3 1124.8L645.6 1121.7L644.0 1120.2L643.7 1118.9L643.1 1117.0L643.1 1116.4L642.2 1115.1L641.2 1113.6L639.7 1112.0L638.0 1110.4L638.9 1109.5L641.4 1108.7L641.5 1106.6L639.3 1105.5L636.7 1106.2L635.3 1106.8L634.0 1107.6ZM607.1 1116.6L610.5 1116.4L613.3 1115.1L616.0 1115.1L618.0 1116.4L621.2 1117.2L623.2 1117.0L625.8 1116.1L625.9 1114.7L624.6 1113.2L622.5 1112.1L619.7 1110.4L618.0 1109.5L618.7 1108.3L619.2 1107.4L620.2 1105.5L618.2 1105.7L615.1 1106.6L614.7 1107.7L616.3 1108.7L617.0 1108.6L617.4 1108.9L615.7 1109.5L614.3 1110.4L612.8 1110.2L612.6 1109.1L611.2 1108.7L612.7 1107.4L610.3 1107.2L608.7 1106.4L608.3 1106.8L607.1 1109.1L605.9 1111.0L605.7 1112.5L604.9 1112.9L604.4 1114.2L605.3 1115.1L605.7 1116.1Z" fill="#fff"/><path d="M438.9 1113.4L439.7 1114.7L440.8 1115.3L444.1 1114.0L447.5 1112.7L450.3 1110.8L454.0 1108.5L457.6 1106.4L460.2 1104.9" fill="none" stroke="#fff" stroke-width="0.9"/><path d="M331.5 1091.5L328.1 1092.6L324.3 1093.8L320.7 1094.7L316.3 1095.7L311.4 1096.4L307.5 1096.8" fill="none" stroke="#3366ff" stroke-width="0.9" stroke-dasharray="2.2 1.2"/><path d="M787.8 1098.9L787.4 1101.3L786.8 1104.7L785.7 1107.6L783.6 1109.1L781.7 1110.8" fill="none" stroke="#dde3ec" stroke-width="0.9" stroke-dasharray="1.5 1.5"/></svg>
<svg class="a" style="left:925px;top:1010px" width="440" height="240" viewBox="925 1010 440 240" ><line x1="1020.7" y1="1019" x2="1020.7" y2="1226" stroke="#ecedf4" stroke-width="1.6"/><line x1="1054.6" y1="1019" x2="1054.6" y2="1220.5" stroke="#ecedf4" stroke-width="1"/><line x1="1088.5" y1="1019" x2="1088.5" y2="1226" stroke="#ecedf4" stroke-width="1"/><line x1="1122.5" y1="1019" x2="1122.5" y2="1220.5" stroke="#ecedf4" stroke-width="1"/><line x1="1156.4" y1="1019" x2="1156.4" y2="1226" stroke="#ecedf4" stroke-width="1"/><line x1="1190.3" y1="1019" x2="1190.3" y2="1220.5" stroke="#ecedf4" stroke-width="1"/><line x1="1224.2" y1="1019" x2="1224.2" y2="1226" stroke="#ecedf4" stroke-width="1"/><line x1="1258.2" y1="1019" x2="1258.2" y2="1220.5" stroke="#ecedf4" stroke-width="1"/><line x1="1292.1" y1="1019" x2="1292.1" y2="1226" stroke="#ecedf4" stroke-width="1"/><line x1="1326.0" y1="1019" x2="1326.0" y2="1220.5" stroke="#ecedf4" stroke-width="1"/><line x1="1014.8" y1="1053.9" x2="1020.7" y2="1053.9" stroke="#ecedf4" stroke-width="1"/><rect x="1020.7" y="1052.3000000000002" width="332.5" height="3.2" rx="1.4" fill="#6c9cf6"/><text x="938.9" y="1058" textLength="68.5" lengthAdjust="spacing" style="font-size:11.3px;fill:#6b7394;stroke:#6b7394;stroke-width:0.08px">United States</text><line x1="1014.8" y1="1086.9" x2="1020.7" y2="1086.9" stroke="#ecedf4" stroke-width="1"/><rect x="1020.7" y="1085.3000000000002" width="169.6" height="3.2" rx="1.4" fill="#6c9cf6"/><text x="962.4" y="1090.9" textLength="45" lengthAdjust="spacing" style="font-size:11.3px;fill:#6b7394;stroke:#6b7394;stroke-width:0.08px">Germany</text><line x1="1014.8" y1="1120" x2="1020.7" y2="1120" stroke="#ecedf4" stroke-width="1"/><rect x="1020.7" y="1118.4" width="135.7" height="3.2" rx="1.4" fill="#6c9cf6"/><text x="977.4" y="1124.2" textLength="30" lengthAdjust="spacing" style="font-size:11.3px;fill:#6b7394;stroke:#6b7394;stroke-width:0.08px">Japan</text><line x1="1014.8" y1="1152.9" x2="1020.7" y2="1152.9" stroke="#ecedf4" stroke-width="1"/><rect x="1020.7" y="1151.3000000000002" width="88.2" height="3.2" rx="1.4" fill="#6c9cf6"/><text x="956.5" y="1157.1" textLength="50.9" lengthAdjust="spacing" style="font-size:11.3px;fill:#6b7394;stroke:#6b7394;stroke-width:0.08px">Singapore</text><line x1="1014.8" y1="1186" x2="1020.7" y2="1186" stroke="#ecedf4" stroke-width="1"/><rect x="1020.7" y="1184.4" width="81.4" height="3.2" rx="1.4" fill="#6c9cf6"/><text x="968.8" y="1189.9" textLength="38.6" lengthAdjust="spacing" style="font-size:11.3px;fill:#6b7394;stroke:#6b7394;stroke-width:0.08px">Canada</text><text x="1017.9" y="1241.1" textLength="5.6" lengthAdjust="spacing" style="font-size:10.6px;fill:#6b7394;stroke:#6b7394;stroke-width:0.08px">0</text><text x="1083.1" y="1241.1" textLength="10.9" lengthAdjust="spacing" style="font-size:10.6px;fill:#6b7394;stroke:#6b7394;stroke-width:0.08px">10</text><text x="1150.4" y="1241.1" textLength="12.1" lengthAdjust="spacing" style="font-size:10.6px;fill:#6b7394;stroke:#6b7394;stroke-width:0.08px">20</text><text x="1218.1" y="1241.1" textLength="12.3" lengthAdjust="spacing" style="font-size:10.6px;fill:#6b7394;stroke:#6b7394;stroke-width:0.08px">30</text><text x="1285.8" y="1241.1" textLength="12.6" lengthAdjust="spacing" style="font-size:10.6px;fill:#6b7394;stroke:#6b7394;stroke-width:0.08px">40</text></svg>
<span class="t" style="left:280.00px;top:956.00px;font-size:16.64px;color:#1c2554;letter-spacing:0.241px;">Client Requests by Country</span>
<span class="t" style="left:295.90px;top:987.00px;font-size:11.44px;color:#6b7394;letter-spacing:-0.330px;">1 - 13</span>
<span class="t" style="left:358.10px;top:987.00px;font-size:11.44px;color:#6b7394;letter-spacing:0.048px;">14 - 26</span>
<span class="t" style="left:428.70px;top:987.00px;font-size:11.44px;color:#6b7394;letter-spacing:0.182px;">27 - 39</span>
<span class="t" style="left:500.50px;top:987.00px;font-size:11.44px;color:#6b7394;letter-spacing:0.332px;">40 - 49</span>
<span class="t" style="left:929.20px;top:991.00px;font-size:13.0px;color:#1c2554;letter-spacing:0.281px;-webkit-text-stroke:0.58px #1c2554;">Top 5 Countries</span>
</section>
<div class="a" style="left:1449.8px;top:1200.4px;width:42px;height:43px;background:#fff;border:1px solid #e6e8f5;border-radius:5px 0 0 5px;box-shadow:0 2px 22px rgba(40,50,110,.13);box-sizing:border-box;"></div><svg class="a" style="left:1455px;top:1205px" width="30" height="32" viewBox="1455 1205 30 32" ><circle cx="1469" cy="1220.8" r="6.3" fill="none" stroke="#3d63f5" stroke-width="1.3"/><text x="1469" y="1224.3" text-anchor="middle" style="font-size:9.5px;font-weight:700;fill:#3d63f5">?</text></svg>
</main>
</div>
</body></html>
